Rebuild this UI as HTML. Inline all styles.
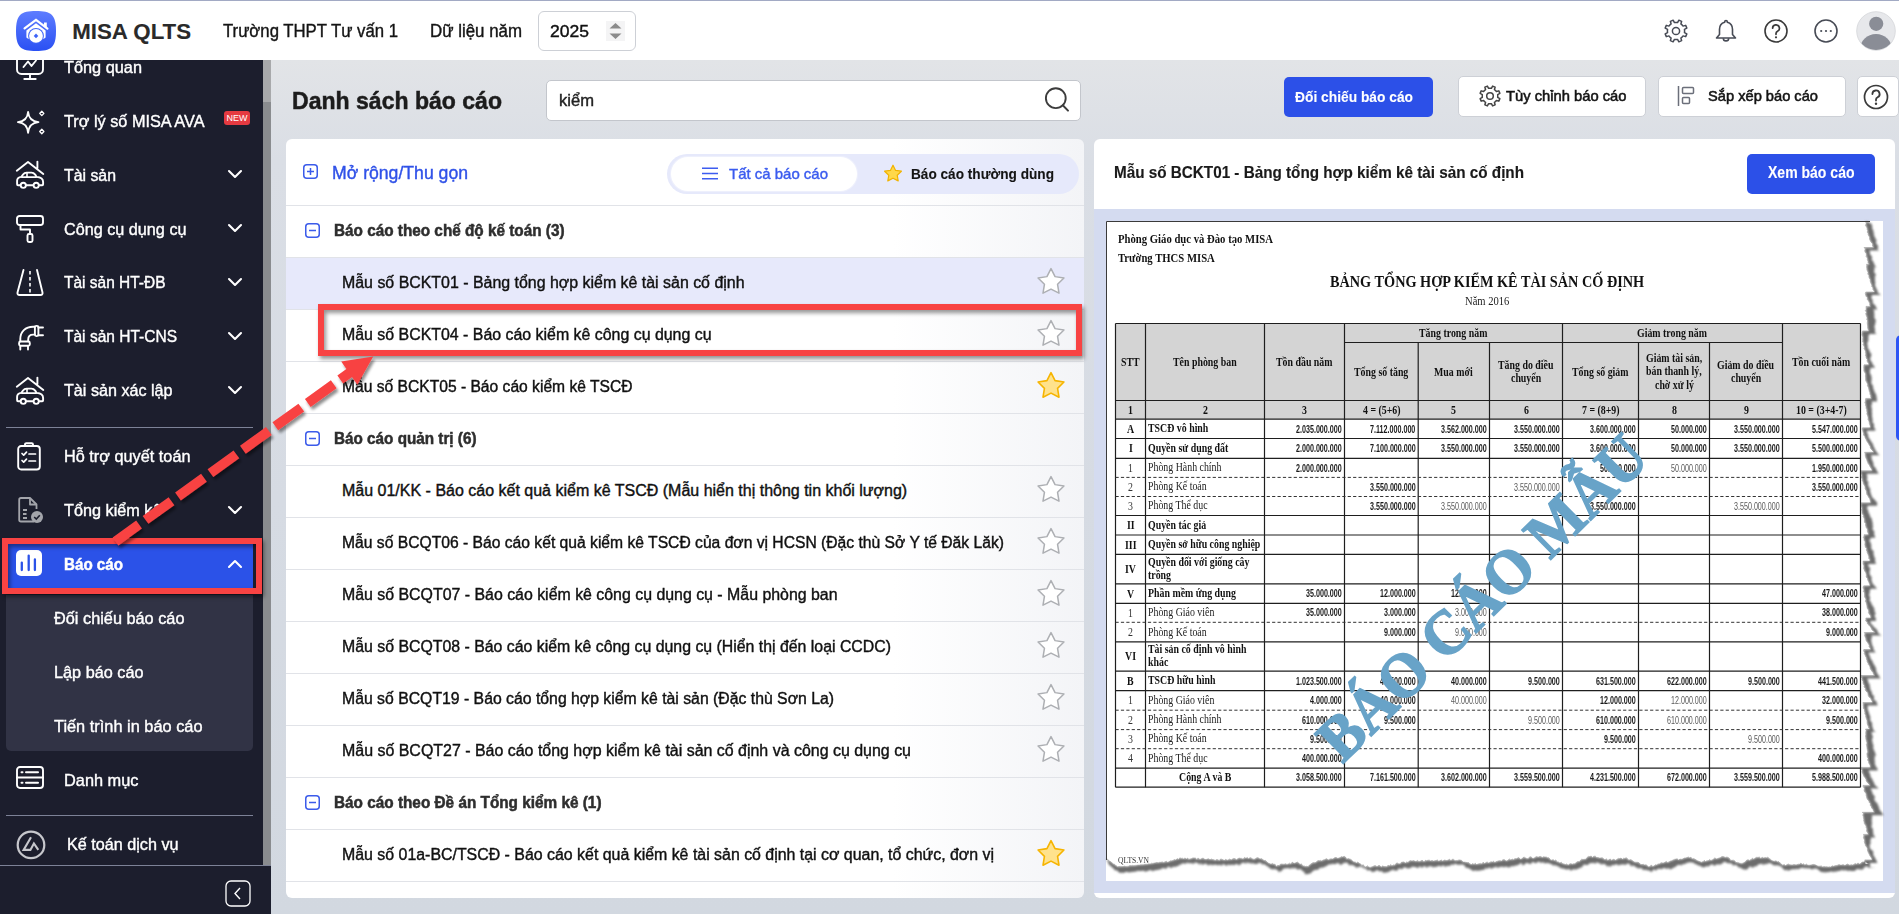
<!DOCTYPE html>
<html><head><meta charset="utf-8">
<style>
*{box-sizing:border-box;margin:0;padding:0}
html,body{width:1899px;height:914px;overflow:hidden}
body{position:relative;background:linear-gradient(180deg,#e2e4e7 60px,#dadee5 160px,#d6dbe3 500px,#d2d8e0 914px);font-family:"Liberation Sans",sans-serif;color:#1f1f1f}
.a{position:absolute}
.t{position:absolute;white-space:nowrap;line-height:1;transform-origin:0 0}
svg.a{overflow:visible}
</style></head>
<body>
<div class="a" style="left:0px;top:60px;width:263px;height:854px;background:#1c1e2d"></div>
<div class="a" style="left:263px;top:60px;width:8px;height:810px;background:#8a8c8f"></div>
<div class="a" style="left:263px;top:60px;width:8px;height:42px;background:#a8a9ab"></div>
<svg class="a" style="left:16px;top:48px" width="28" height="32" viewBox="0 0 28 32"><g fill="none" stroke="#fff" stroke-width="1.9" stroke-linecap="round" stroke-linejoin="round"><rect x="1" y="1" width="26" height="25" rx="4.5"/><path d="M7.5 19 L12 13.5 L15.5 18 L20 12.5"/><path d="M14 26 V30.5 M8.3 31 H19.7"/></g></svg>
<div class="t" style="left:64.00px;top:58.61px;font-size:17.00px;color:#fff;-webkit-text-stroke-width:0.4px;transform:scaleX(0.9595);">Tổng quan</div>
<svg class="a" style="left:16px;top:108px" width="30" height="28" viewBox="0 0 30 28"><g fill="none" stroke="#fff" stroke-width="1.9" stroke-linecap="round" stroke-linejoin="round"><path d="M12.1 3.9 Q12.9 13.3 22.5 14.1 Q12.9 14.9 12.1 24.9 Q11.3 14.9 1.9 14.1 Q11.3 13.3 12.1 3.9Z" stroke-width="1.8"/><path d="M25.8 3.2 L27.9 5.4 L25.8 7.6 L23.7 5.4Z" stroke-width="1.3"/><path d="M25.8 21.3 L27.9 23.5 L25.8 25.7 L23.7 23.5Z" stroke-width="1.3"/></g></svg>
<div class="t" style="left:64.00px;top:112.61px;font-size:17.00px;color:#fff;-webkit-text-stroke-width:0.4px;transform:scaleX(0.9566);">Trợ lý số MISA AVA</div>
<div class="a" style="left:224px;top:111px;width:26px;height:14px;background:#e53a41;border-radius:3px"></div>
<div class="t" style="left:226.50px;top:114.38px;font-size:9.00px;color:#fff;">NEW</div>
<svg class="a" style="left:12px;top:155px" width="36" height="36" viewBox="0 0 36 36"><g fill="none" stroke="#fff" stroke-width="1.9" stroke-linecap="round" stroke-linejoin="round"><path d="M4.8 15.7 L16 7 L31.3 19 M25.4 6.6 V13.2"/><path d="M8.6 30.2 H6 C5.4 30.2 5.1 29.8 5.1 29.2 V25.8 C5.1 23.6 6.6 22.2 9.4 21.9 L11 19.5 C11.9 18.3 13 17.6 14.6 17.6 H19.4 C21 17.6 22.2 18.3 23.2 19.6 L24.6 21.9 C28.6 22.2 31.1 23.8 31.1 27 V29.2 C31.1 29.8 30.8 30.2 30.2 30.2 H27 M14 30.2 H21.4"/><path d="M9.8 22.1 H24.2 M15 18 V22" stroke-width="1.6"/><circle cx="11.3" cy="30.3" r="2.6" fill="#1c1e2d"/><circle cx="24.2" cy="30.3" r="2.6" fill="#1c1e2d"/></g></svg>
<div class="t" style="left:64.00px;top:166.61px;font-size:17.00px;color:#fff;-webkit-text-stroke-width:0.4px;transform:scaleX(0.9327);">Tài sản</div>
<svg class="a" style="left:228px;top:170px" width="14" height="9" viewBox="0 0 14 9"><path d="M1 1 L7 7 L13 1" fill="none" stroke="#fff" stroke-width="2.1" stroke-linecap="round" stroke-linejoin="round"/></svg>
<svg class="a" style="left:16px;top:215px" width="28" height="28" viewBox="0 0 28 28"><g fill="none" stroke="#fff" stroke-width="1.9" stroke-linecap="round" stroke-linejoin="round"><rect x="1" y="1" width="26" height="9" rx="2.5"/><path d="M4.5 10 V14.5 H14 V19"/><rect x="11.5" y="19" width="5" height="8" rx="1.5"/></g></svg>
<div class="t" style="left:64.00px;top:220.61px;font-size:17.00px;color:#fff;-webkit-text-stroke-width:0.4px;transform:scaleX(0.9530);">Công cụ dụng cụ</div>
<svg class="a" style="left:228px;top:224px" width="14" height="9" viewBox="0 0 14 9"><path d="M1 1 L7 7 L13 1" fill="none" stroke="#fff" stroke-width="2.1" stroke-linecap="round" stroke-linejoin="round"/></svg>
<svg class="a" style="left:16px;top:269px" width="28" height="28" viewBox="0 0 28 28"><g fill="none" stroke="#fff" stroke-width="1.9" stroke-linecap="round" stroke-linejoin="round"><path d="M7.5 1 L1.5 23.5 C1.2 25 2 26 3.5 26 H24.5 C26 26 26.8 25 26.5 23.5 L21 1"/></g><path d="M14 2 V24" stroke="#fff" stroke-width="1.6" stroke-dasharray="3.5 2.5"/></svg>
<div class="t" style="left:64.00px;top:274.11px;font-size:17.00px;color:#fff;-webkit-text-stroke-width:0.4px;transform:scaleX(0.9105);">Tài sản HT-ĐB</div>
<svg class="a" style="left:228px;top:278px" width="14" height="9" viewBox="0 0 14 9"><path d="M1 1 L7 7 L13 1" fill="none" stroke="#fff" stroke-width="2.1" stroke-linecap="round" stroke-linejoin="round"/></svg>
<svg class="a" style="left:14px;top:320px" width="36" height="36" viewBox="0 0 36 36"><g fill="none" stroke="#fff" stroke-width="1.9" stroke-linecap="round" stroke-linejoin="round"><path d="M6.3 21.3 V19 C6.3 11.8 11.5 6.7 19 6.7 H20.8 M14.2 21.3 V19.5 C14.2 16.5 16.2 14.6 19.2 14.6 H20.8 M24.4 7.5 H29 M24.4 15.2 H29 M6.3 25.9 V29.6 M14 25.9 V29.6"/><rect x="20.9" y="5.9" width="3.5" height="10.2" rx="1.5"/><rect x="5.1" y="21.5" width="10.7" height="4.3" rx="1.5"/></g></svg>
<div class="t" style="left:64.00px;top:328.11px;font-size:17.00px;color:#fff;-webkit-text-stroke-width:0.4px;transform:scaleX(0.9131);">Tài sản HT-CNS</div>
<svg class="a" style="left:228px;top:332px" width="14" height="9" viewBox="0 0 14 9"><path d="M1 1 L7 7 L13 1" fill="none" stroke="#fff" stroke-width="2.1" stroke-linecap="round" stroke-linejoin="round"/></svg>
<svg class="a" style="left:12px;top:371px" width="36" height="36" viewBox="0 0 36 36"><g fill="none" stroke="#fff" stroke-width="1.9" stroke-linecap="round" stroke-linejoin="round"><path d="M4.8 15.7 L16 7 L31.3 19 M25.4 6.6 V13.2"/><path d="M8.6 30.2 H6 C5.4 30.2 5.1 29.8 5.1 29.2 V25.8 C5.1 23.6 6.6 22.2 9.4 21.9 L11 19.5 C11.9 18.3 13 17.6 14.6 17.6 H19.4 C21 17.6 22.2 18.3 23.2 19.6 L24.6 21.9 C28.6 22.2 31.1 23.8 31.1 27 V29.2 C31.1 29.8 30.8 30.2 30.2 30.2 H27 M14 30.2 H21.4"/><path d="M9.8 22.1 H24.2 M15 18 V22" stroke-width="1.6"/><circle cx="11.3" cy="30.3" r="2.6" fill="#1c1e2d"/><circle cx="24.2" cy="30.3" r="2.6" fill="#1c1e2d"/></g></svg>
<div class="t" style="left:64.00px;top:382.11px;font-size:17.00px;color:#fff;-webkit-text-stroke-width:0.4px;transform:scaleX(0.9489);">Tài sản xác lập</div>
<svg class="a" style="left:228px;top:386px" width="14" height="9" viewBox="0 0 14 9"><path d="M1 1 L7 7 L13 1" fill="none" stroke="#fff" stroke-width="2.1" stroke-linecap="round" stroke-linejoin="round"/></svg>
<div class="a" style="left:6px;top:427px;width:247px;height:1px;background:#7d8297"></div>
<svg class="a" style="left:17px;top:442px" width="24" height="29" viewBox="0 0 24 29"><g fill="none" stroke="#fff" stroke-width="1.9" stroke-linecap="round" stroke-linejoin="round"><rect x="1.2" y="4" width="21.6" height="23.5" rx="3"/><path d="M8 4 V2.5 C8 1.7 8.6 1.2 9.3 1.2 H14.7 C15.4 1.2 16 1.7 16 2.5 V4 Z"/><path d="M5 11.5 L6.7 13.2 L9.5 10.2 M12 12 H18.5 M5 18.5 L6.7 20.2 L9.5 17.2 M12 19 H18.5" stroke-width="1.7"/></g></svg>
<div class="t" style="left:64.00px;top:447.61px;font-size:17.00px;color:#fff;-webkit-text-stroke-width:0.4px;transform:scaleX(0.9575);">Hỗ trợ quyết toán</div>
<svg class="a" style="left:18px;top:497px" width="26" height="28" viewBox="0 0 26 28"><g fill="none" stroke="#a3a5ab" stroke-width="1.8" stroke-linejoin="round"><path d="M16 24.5 H3 C2 24.5 1.2 23.7 1.2 22.7 V2.8 C1.2 1.8 2 1 3 1 H12 L18.5 7.5 V12"/><path d="M12 1 V7.5 H18.5"/><path d="M5 13 H9 M5 17 H8.5 M5 21 H9"/></g><circle cx="19" cy="20" r="6" fill="#a3a5ab"/><path d="M16.2 20 L18.3 22 L21.8 18.3" fill="none" stroke="#1c1e2d" stroke-width="1.6"/></svg>
<div class="t" style="left:64.00px;top:501.61px;font-size:17.00px;color:#fff;-webkit-text-stroke-width:0.4px;transform:scaleX(0.9550);">Tổng kiểm kê</div>
<svg class="a" style="left:228px;top:506px" width="14" height="9" viewBox="0 0 14 9"><path d="M1 1 L7 7 L13 1" fill="none" stroke="#fff" stroke-width="2.1" stroke-linecap="round" stroke-linejoin="round"/></svg>
<div class="a" style="left:6px;top:538px;width:247px;height:53px;background:#2b52e8"></div>
<svg class="a" style="left:16px;top:550px" width="26" height="26" viewBox="0 0 26 26"><rect x="0" y="0" width="26" height="26" rx="5" fill="#fff"/><path d="M5.8 12.6 V20 M12.7 5.6 V20 M18.9 9.5 V20" stroke="#2b52e8" stroke-width="2.3" stroke-linecap="round"/></svg>
<div class="t" style="left:64.00px;top:555.61px;font-size:17.00px;color:#fff;font-weight:bold;-webkit-text-stroke-width:0.5px;transform:scaleX(0.8921);">Báo cáo</div>
<svg class="a" style="left:228px;top:559px" width="14" height="9" viewBox="0 0 14 9"><path d="M1 8 L7 2 L13 8" fill="none" stroke="#fff" stroke-width="2.1" stroke-linecap="round" stroke-linejoin="round"/></svg>
<div class="a" style="left:6px;top:595px;width:247px;height:156px;background:#313345;border-radius:0 0 5px 5px"></div>
<div class="t" style="left:54.00px;top:609.61px;font-size:17.00px;color:#fff;-webkit-text-stroke-width:0.4px;transform:scaleX(0.9589);">Đối chiếu báo cáo</div>
<div class="t" style="left:54.00px;top:663.61px;font-size:17.00px;color:#fff;-webkit-text-stroke-width:0.4px;transform:scaleX(0.9563);">Lập báo cáo</div>
<div class="t" style="left:54.00px;top:717.61px;font-size:17.00px;color:#fff;-webkit-text-stroke-width:0.4px;transform:scaleX(0.9621);">Tiến trình in báo cáo</div>
<svg class="a" style="left:16px;top:766px" width="28" height="23" viewBox="0 0 28 23"><g fill="none" stroke="#fff" stroke-width="1.9" stroke-linecap="round" stroke-linejoin="round"><rect x="1" y="1" width="26" height="21" rx="3"/><path d="M1 11.5 H27"/><path d="M5.5 6.2 H6.5 M5.5 16.7 H6.5 M10 6.2 H22 M10 16.7 H22" stroke-width="2"/></g></svg>
<div class="t" style="left:64.00px;top:771.91px;font-size:17.00px;color:#fff;-webkit-text-stroke-width:0.4px;transform:scaleX(0.9615);">Danh mục</div>
<div class="a" style="left:6px;top:815px;width:247px;height:1px;background:#7d8297"></div>
<svg class="a" style="left:16px;top:831px" width="30" height="30" viewBox="0 0 30 30"><circle cx="15" cy="13.9" r="13.3" fill="none" stroke="#c6c7cc" stroke-width="2.2"/><path d="M15 6.2 L7.6 18.9 H14.4 L17.9 12.4 L22.3 18.9" fill="none" stroke="#c6c7cc" stroke-width="2.1" stroke-linejoin="miter" stroke-linecap="butt"/></svg>
<div class="t" style="left:66.50px;top:836.11px;font-size:17.00px;color:#fff;-webkit-text-stroke-width:0.4px;transform:scaleX(0.9514);">Kế toán dịch vụ</div>
<div class="a" style="left:263px;top:865px;width:8px;height:49px;background:#1c1e2d"></div>
<div class="a" style="left:0px;top:865px;width:271px;height:1px;background:#7d8297"></div>
<svg class="a" style="left:225px;top:880px" width="26" height="27" viewBox="0 0 26 27"><rect x="1" y="1" width="24" height="25" rx="5" fill="none" stroke="#fff" stroke-width="1.3"/><path d="M15 8 L10 13.5 L15 19" fill="none" stroke="#fff" stroke-width="1.4"/></svg>
<div class="a" style="left:0px;top:0px;width:1899px;height:1px;background:#a2aac4"></div>
<div class="a" style="left:0px;top:1px;width:1899px;height:59px;background:#fff"></div>
<svg class="a" style="left:16px;top:11px" width="40" height="40" viewBox="0 0 40 40"><defs><linearGradient id="lg" x1="0" y1="0" x2="0" y2="1"><stop offset="0" stop-color="#5e7dff"/><stop offset="1" stop-color="#2a50f3"/></linearGradient></defs>
<path d="M20 0 C35 0 40 3.5 40 20 C40 36.5 35 40 20 40 C5 40 0 36.5 0 20 C0 3.5 5 0 20 0Z" fill="url(#lg)"/>
<path d="M8.6 17.4 L20 8.8 L31.4 17.6" fill="none" stroke="#fff" stroke-width="2.3" stroke-linecap="round" stroke-linejoin="round"/>
<path d="M28 11.6 H30.8 V17.2 L28 15Z" fill="#fff"/>
<path d="M10.4 19.6 L20 12.2 L29.6 19.6 V26.5 Q28 28.2 26 28.5 H14 Q12 28.2 10.4 26.5Z" fill="#fff"/>
<circle cx="20" cy="24.9" r="7.9" fill="#3d63f8"/>
<circle cx="20" cy="24.9" r="6.9" fill="#fff"/>
<path d="M20 22.6 L22.3 24.9 L20 27.2 L17.7 24.9Z" fill="#3d63f8"/></svg>
<div class="t" style="left:72.20px;top:20.72px;font-size:22.30px;color:#2a2a2a;font-weight:bold;-webkit-text-stroke:0.1px #2a2a2a;">MISA QLTS</div>
<div class="t" style="left:223.00px;top:22.26px;font-size:18.00px;color:#141414;-webkit-text-stroke-width:0.4px;transform:scaleX(0.9294);">Trường THPT Tư vấn 1</div>
<div class="t" style="left:430.00px;top:22.26px;font-size:18.00px;color:#141414;-webkit-text-stroke-width:0.4px;transform:scaleX(0.9379);">Dữ liệu năm</div>
<div class="a" style="left:538px;top:11px;width:98px;height:40px;border:1px solid #cdd0d6;border-radius:6px;background:#fff"></div>
<div class="t" style="left:549.50px;top:23.41px;font-size:17.00px;color:#111;-webkit-text-stroke-width:0.4px;transform:scaleX(1.0312);">2025</div>
<div class="a" style="left:606px;top:21px;width:19px;height:20px;background:#f4f4f5"></div>
<svg class="a" style="left:606px;top:21px" width="19" height="20" viewBox="0 0 19 20"><path d="M3.5 7.5 L9.5 2 L15.5 7.5Z M3.5 12.5 L9.5 18 L15.5 12.5Z" fill="#8c8c8c"/></svg>
<svg class="a" style="left:1664px;top:19px" width="24" height="24" viewBox="0 0 24 24"><g fill="none" stroke="#474b55" stroke-width="1.5" stroke-linejoin="round"><path d="M20.60 12.00 L20.46 13.55 L22.83 14.87 L21.68 17.63 L19.07 16.89 L18.08 18.08 L16.89 19.07 L17.63 21.68 L14.87 22.83 L13.55 20.46 L12.00 20.60 L10.45 20.46 L9.13 22.83 L6.37 21.68 L7.11 19.07 L5.92 18.08 L4.93 16.89 L2.32 17.63 L1.17 14.87 L3.54 13.55 L3.40 12.00 L3.54 10.45 L1.17 9.13 L2.32 6.37 L4.93 7.11 L5.92 5.92 L7.11 4.93 L6.37 2.32 L9.13 1.17 L10.45 3.54 L12.00 3.40 L13.55 3.54 L14.87 1.17 L17.63 2.32 L16.89 4.93 L18.08 5.92 L19.07 7.11 L21.68 6.37 L22.83 9.13 L20.46 10.45Z"/><circle cx="12" cy="12" r="3.6"/></g></svg>
<svg class="a" style="left:1714px;top:19px" width="24" height="24" viewBox="0 0 24 24"><g fill="none" stroke="#474b55" stroke-width="1.6" stroke-linejoin="round">
<path d="M12 1.5c-.9 0-1.3.5-1.3 1.2v.6C7.4 4.2 5.5 6.9 5.5 10.3v5.2L2.5 19h19l-3-3.5v-5.2c0-3.4-1.9-6.1-5.2-7v-.6c0-.7-.4-1.2-1.3-1.2z"/>
<path d="M9.3 19.2a2.7 2.7 0 0 0 5.4 0"/></g></svg>
<svg class="a" style="left:1764px;top:19px" width="24" height="24" viewBox="0 0 24 24"><circle cx="12" cy="12" r="11" fill="none" stroke="#3a3a3a" stroke-width="1.6"/>
<path d="M8.6 9.2a3.4 3.4 0 1 1 4.9 3.1c-.9.5-1.5 1.1-1.5 2.2v.8" fill="none" stroke="#3a3a3a" stroke-width="1.7" stroke-linecap="round"/>
<circle cx="12" cy="18.3" r="1.1" fill="#3a3a3a"/></svg>
<svg class="a" style="left:1814px;top:19px" width="24" height="24" viewBox="0 0 24 24"><circle cx="12" cy="12" r="11" fill="none" stroke="#474b55" stroke-width="1.6"/>
<circle cx="7.2" cy="12" r="1.1" fill="#474b55"/><circle cx="12" cy="12" r="1.1" fill="#474b55"/><circle cx="16.8" cy="12" r="1.1" fill="#474b55"/></svg>
<svg class="a" style="left:1856px;top:11px" width="40" height="40" viewBox="0 0 40 40"><defs><clipPath id="av"><circle cx="20" cy="20" r="19"/></clipPath></defs><circle cx="20" cy="20" r="19.3" fill="#e7e8eb" stroke="#d4d5d9" stroke-width="0.8"/><g clip-path="url(#av)"><circle cx="20.2" cy="12.8" r="7.1" fill="#8a8d96"/><ellipse cx="20" cy="38.5" rx="16" ry="15.5" fill="#8a8d96"/></g></svg>
<div class="t" style="left:292.00px;top:88.68px;font-size:24.00px;color:#1c1c1c;font-weight:bold;-webkit-text-stroke-width:0.5px;transform:scaleX(0.9601);">Danh sách báo cáo</div>
<div class="a" style="left:546px;top:80px;width:535px;height:41px;background:#fff;border:1px solid #c3c6cc;border-radius:5px"></div>
<div class="t" style="left:559.00px;top:92.96px;font-size:16.00px;color:#222;-webkit-text-stroke-width:0.4px;transform:scaleX(1.0360);">kiểm</div>
<svg class="a" style="left:1043px;top:85px" width="28" height="28" viewBox="0 0 28 28"><circle cx="12.8" cy="13.2" r="9.9" fill="none" stroke="#3c3c3c" stroke-width="1.9"/><path d="M19.8 20.3 L25 25.6" stroke="#3c3c3c" stroke-width="2" stroke-linecap="round"/></svg>
<div class="a" style="left:1284px;top:77px;width:149px;height:40px;background:#2c50e8;border-radius:5px"></div>
<div class="t" style="left:1295.00px;top:88.80px;font-size:15.00px;color:#fff;font-weight:bold;transform:scaleX(0.9193);-webkit-text-stroke:0.1px #fff;">Đối chiếu báo cáo</div>
<div class="a" style="left:1458px;top:76px;width:188px;height:41px;background:#fff;border:1px solid #cdd0d6;border-radius:5px"></div>
<svg class="a" style="left:1479px;top:85px" width="22" height="22" viewBox="0 0 22 22"><g fill="none" stroke="#444" stroke-width="1.5" stroke-linejoin="round"><path d="M18.80 11.00 L18.67 12.40 L20.86 13.61 L19.82 16.12 L17.42 15.43 L16.52 16.52 L15.43 17.42 L16.12 19.82 L13.61 20.86 L12.40 18.67 L11.00 18.80 L9.60 18.67 L8.39 20.86 L5.88 19.82 L6.57 17.42 L5.48 16.52 L4.58 15.43 L2.18 16.12 L1.14 13.61 L3.33 12.40 L3.20 11.00 L3.33 9.60 L1.14 8.39 L2.18 5.88 L4.58 6.57 L5.48 5.48 L6.57 4.58 L5.88 2.18 L8.39 1.14 L9.60 3.33 L11.00 3.20 L12.40 3.33 L13.61 1.14 L16.12 2.18 L15.43 4.58 L16.52 5.48 L17.42 6.57 L19.82 5.88 L20.86 8.39 L18.67 9.60Z"/><circle cx="11" cy="11" r="3.3"/></g></svg>
<div class="t" style="left:1506.00px;top:88.30px;font-size:15.00px;color:#141414;transform:scaleX(0.9830);-webkit-text-stroke:0.55px #141414;">Tùy chỉnh báo cáo</div>
<div class="a" style="left:1658px;top:76px;width:188px;height:41px;background:#fff;border:1px solid #cdd0d6;border-radius:5px"></div>
<svg class="a" style="left:1677px;top:85px" width="20" height="22" viewBox="0 0 20 22"><g fill="none" stroke="#6b6f7a" stroke-width="1.5"><path d="M1.5 1 V21"/><rect x="5.5" y="2.5" width="11" height="6" rx="1"/><rect x="5.5" y="12.5" width="7" height="6" rx="1"/></g></svg>
<div class="t" style="left:1708.00px;top:88.30px;font-size:15.00px;color:#141414;transform:scaleX(0.9770);-webkit-text-stroke:0.55px #141414;">Sắp xếp báo cáo</div>
<div class="a" style="left:1857px;top:76px;width:42px;height:41px;background:#fff;border:1px solid #cdd0d6;border-radius:5px"></div>
<svg class="a" style="left:1863px;top:84px" width="26" height="26" viewBox="0 0 26 26"><circle cx="13" cy="13" r="11.5" fill="none" stroke="#3a3a3a" stroke-width="1.7"/><path d="M9.4 10a3.6 3.6 0 1 1 5.2 3.3c-1 .5-1.6 1.2-1.6 2.3v.9" fill="none" stroke="#3a3a3a" stroke-width="1.8" stroke-linecap="round"/><circle cx="13" cy="19.8" r="1.2" fill="#3a3a3a"/></svg>
<div class="a" style="left:286px;top:139px;width:798px;height:759px;background:linear-gradient(90deg,#fff 0%,#fff 76%,#f3f4f7 100%);border-radius:6px"></div>
<svg class="a" style="left:303px;top:164px" width="15" height="15" viewBox="0 0 15 15"><rect x="0.75" y="0.75" width="13.5" height="13.5" rx="3" fill="none" stroke="#3b5bea" stroke-width="1.5"/><path d="M7.5 4 V11 M4 7.5 H11" stroke="#3b5bea" stroke-width="1.5"/></svg>
<div class="t" style="left:332.00px;top:164.26px;font-size:18.00px;color:#2f51e8;-webkit-text-stroke-width:0.4px;transform:scaleX(0.9793);">Mở rộng/Thu gọn</div>
<div class="a" style="left:667px;top:154px;width:412px;height:40px;background:#e6e9fb;border-radius:20px"></div>
<div class="a" style="left:671px;top:157px;width:186px;height:34px;background:#fff;border-radius:17px;box-shadow:0 0 0 1px #eef0fc"></div>
<svg class="a" style="left:701px;top:167px" width="18" height="13" viewBox="0 0 18 13"><path d="M1 1.2 H17 M1 6.5 H17 M1 11.8 H17" stroke="#3d5cf0" stroke-width="1.6"/></svg>
<div class="t" style="left:729.00px;top:166.30px;font-size:15.00px;color:#3a5bef;-webkit-text-stroke-width:0.4px;transform:scaleX(0.9977);">Tất cả báo cáo</div>
<svg class="a" style="left:883px;top:164px" width="20" height="18" viewBox="0 0 20 18"><path d="M10 1.2 L12.6 6.4 L18.4 7.2 L14.2 11.2 L15.2 16.9 L10 14.2 L4.8 16.9 L5.8 11.2 L1.6 7.2 L7.4 6.4Z" fill="#ffd84a" stroke="#f1b300" stroke-width="1.2" stroke-linejoin="round"/></svg>
<div class="t" style="left:911.00px;top:166.30px;font-size:15.00px;color:#141414;font-weight:bold;transform:scaleX(0.9088);-webkit-text-stroke:0.1px #141414;">Báo cáo thường dùng</div>
<div class="a" style="left:286px;top:205px;width:798px;height:1px;background:#e1e3e8"></div>
<svg class="a" style="left:305px;top:223px" width="15" height="15" viewBox="0 0 15 15"><rect x="0.75" y="0.75" width="13.5" height="13.5" rx="3" fill="none" stroke="#3b5bea" stroke-width="1.5"/><path d="M4 7.5 H11" stroke="#3b5bea" stroke-width="1.5"/></svg>
<div class="t" style="left:334.00px;top:223.26px;font-size:16.00px;color:#2e2e2e;font-weight:bold;-webkit-text-stroke-width:0.5px;transform:scaleX(0.9567);">Báo cáo theo chế độ kế toán (3)</div>
<div class="a" style="left:286px;top:257px;width:798px;height:1px;background:#e1e3e8"></div>
<div class="a" style="left:286px;top:258px;width:798px;height:51px;background:#e7e9fb"></div>
<div class="t" style="left:342.00px;top:275.16px;font-size:16.00px;color:#111;-webkit-text-stroke-width:0.4px;transform:scaleX(0.9951);">Mẫu số BCKT01 - Bảng tổng hợp kiểm kê tài sản cố định</div>
<svg class="a" style="left:1037px;top:267px" width="28" height="27" viewBox="0 0 28 27"><path d="M14.00 1.60 L18.06 9.62 L26.93 11.00 L20.56 17.33 L21.99 26.20 L14.00 22.10 L6.01 26.20 L7.44 17.33 L1.07 11.00 L9.94 9.62Z" fill="#fff" stroke="#adafb3" stroke-width="1.5" stroke-linejoin="round"/></svg>
<div class="a" style="left:286px;top:309px;width:798px;height:1px;background:#e1e3e8"></div>
<div class="t" style="left:342.00px;top:327.16px;font-size:16.00px;color:#111;-webkit-text-stroke-width:0.4px;transform:scaleX(0.9939);">Mẫu số BCKT04 - Báo cáo kiểm kê công cụ dụng cụ</div>
<svg class="a" style="left:1037px;top:319px" width="28" height="27" viewBox="0 0 28 27"><path d="M14.00 1.60 L18.06 9.62 L26.93 11.00 L20.56 17.33 L21.99 26.20 L14.00 22.10 L6.01 26.20 L7.44 17.33 L1.07 11.00 L9.94 9.62Z" fill="#fff" stroke="#adafb3" stroke-width="1.5" stroke-linejoin="round"/></svg>
<div class="a" style="left:286px;top:361px;width:798px;height:1px;background:#e1e3e8"></div>
<div class="t" style="left:342.00px;top:379.16px;font-size:16.00px;color:#111;-webkit-text-stroke-width:0.4px;transform:scaleX(0.9761);">Mẫu số BCKT05 - Báo cáo kiểm kê TSCĐ</div>
<svg class="a" style="left:1037px;top:371px" width="28" height="27" viewBox="0 0 28 27"><path d="M14.00 1.60 L18.06 9.62 L26.93 11.00 L20.56 17.33 L21.99 26.20 L14.00 22.10 L6.01 26.20 L7.44 17.33 L1.07 11.00 L9.94 9.62Z" fill="#ffe28c" stroke="#f6b400" stroke-width="1.6" stroke-linejoin="round"/></svg>
<div class="a" style="left:286px;top:413px;width:798px;height:1px;background:#e1e3e8"></div>
<svg class="a" style="left:305px;top:431px" width="15" height="15" viewBox="0 0 15 15"><rect x="0.75" y="0.75" width="13.5" height="13.5" rx="3" fill="none" stroke="#3b5bea" stroke-width="1.5"/><path d="M4 7.5 H11" stroke="#3b5bea" stroke-width="1.5"/></svg>
<div class="t" style="left:334.00px;top:431.26px;font-size:16.00px;color:#2e2e2e;font-weight:bold;-webkit-text-stroke-width:0.5px;transform:scaleX(0.9541);">Báo cáo quản trị (6)</div>
<div class="a" style="left:286px;top:465px;width:798px;height:1px;background:#e1e3e8"></div>
<div class="t" style="left:342.00px;top:483.16px;font-size:16.00px;color:#111;-webkit-text-stroke-width:0.4px;">Mẫu 01/KK - Báo cáo kết quả kiểm kê TSCĐ (Mẫu hiển thị thông tin khối lượng)</div>
<svg class="a" style="left:1037px;top:475px" width="28" height="27" viewBox="0 0 28 27"><path d="M14.00 1.60 L18.06 9.62 L26.93 11.00 L20.56 17.33 L21.99 26.20 L14.00 22.10 L6.01 26.20 L7.44 17.33 L1.07 11.00 L9.94 9.62Z" fill="#fff" stroke="#adafb3" stroke-width="1.5" stroke-linejoin="round"/></svg>
<div class="a" style="left:286px;top:517px;width:798px;height:1px;background:#e1e3e8"></div>
<div class="t" style="left:342.00px;top:535.16px;font-size:16.00px;color:#111;-webkit-text-stroke-width:0.4px;transform:scaleX(0.9787);">Mẫu số BCQT06 - Báo cáo kết quả kiểm kê TSCĐ của đơn vị HCSN (Đặc thù Sở Y tế Đăk Lăk)</div>
<svg class="a" style="left:1037px;top:527px" width="28" height="27" viewBox="0 0 28 27"><path d="M14.00 1.60 L18.06 9.62 L26.93 11.00 L20.56 17.33 L21.99 26.20 L14.00 22.10 L6.01 26.20 L7.44 17.33 L1.07 11.00 L9.94 9.62Z" fill="#fff" stroke="#adafb3" stroke-width="1.5" stroke-linejoin="round"/></svg>
<div class="a" style="left:286px;top:569px;width:798px;height:1px;background:#e1e3e8"></div>
<div class="t" style="left:342.00px;top:587.16px;font-size:16.00px;color:#111;-webkit-text-stroke-width:0.4px;transform:scaleX(0.9931);">Mẫu số BCQT07 - Báo cáo kiểm kê công cụ dụng cụ - Mẫu phòng ban</div>
<svg class="a" style="left:1037px;top:579px" width="28" height="27" viewBox="0 0 28 27"><path d="M14.00 1.60 L18.06 9.62 L26.93 11.00 L20.56 17.33 L21.99 26.20 L14.00 22.10 L6.01 26.20 L7.44 17.33 L1.07 11.00 L9.94 9.62Z" fill="#fff" stroke="#adafb3" stroke-width="1.5" stroke-linejoin="round"/></svg>
<div class="a" style="left:286px;top:621px;width:798px;height:1px;background:#e1e3e8"></div>
<div class="t" style="left:342.00px;top:639.16px;font-size:16.00px;color:#111;-webkit-text-stroke-width:0.4px;transform:scaleX(0.9909);">Mẫu số BCQT08 - Báo cáo kiểm kê công cụ dụng cụ (Hiển thị đến loại CCDC)</div>
<svg class="a" style="left:1037px;top:631px" width="28" height="27" viewBox="0 0 28 27"><path d="M14.00 1.60 L18.06 9.62 L26.93 11.00 L20.56 17.33 L21.99 26.20 L14.00 22.10 L6.01 26.20 L7.44 17.33 L1.07 11.00 L9.94 9.62Z" fill="#fff" stroke="#adafb3" stroke-width="1.5" stroke-linejoin="round"/></svg>
<div class="a" style="left:286px;top:673px;width:798px;height:1px;background:#e1e3e8"></div>
<div class="t" style="left:342.00px;top:691.16px;font-size:16.00px;color:#111;-webkit-text-stroke-width:0.4px;transform:scaleX(0.9868);">Mẫu số BCQT19 - Báo cáo tổng hợp kiểm kê tài sản (Đặc thù Sơn La)</div>
<svg class="a" style="left:1037px;top:683px" width="28" height="27" viewBox="0 0 28 27"><path d="M14.00 1.60 L18.06 9.62 L26.93 11.00 L20.56 17.33 L21.99 26.20 L14.00 22.10 L6.01 26.20 L7.44 17.33 L1.07 11.00 L9.94 9.62Z" fill="#fff" stroke="#adafb3" stroke-width="1.5" stroke-linejoin="round"/></svg>
<div class="a" style="left:286px;top:725px;width:798px;height:1px;background:#e1e3e8"></div>
<div class="t" style="left:342.00px;top:743.16px;font-size:16.00px;color:#111;-webkit-text-stroke-width:0.4px;transform:scaleX(0.9968);">Mẫu số BCQT27 - Báo cáo tổng hợp kiểm kê tài sản cố định và công cụ dụng cụ</div>
<svg class="a" style="left:1037px;top:735px" width="28" height="27" viewBox="0 0 28 27"><path d="M14.00 1.60 L18.06 9.62 L26.93 11.00 L20.56 17.33 L21.99 26.20 L14.00 22.10 L6.01 26.20 L7.44 17.33 L1.07 11.00 L9.94 9.62Z" fill="#fff" stroke="#adafb3" stroke-width="1.5" stroke-linejoin="round"/></svg>
<div class="a" style="left:286px;top:777px;width:798px;height:1px;background:#e1e3e8"></div>
<svg class="a" style="left:305px;top:795px" width="15" height="15" viewBox="0 0 15 15"><rect x="0.75" y="0.75" width="13.5" height="13.5" rx="3" fill="none" stroke="#3b5bea" stroke-width="1.5"/><path d="M4 7.5 H11" stroke="#3b5bea" stroke-width="1.5"/></svg>
<div class="t" style="left:334.00px;top:795.26px;font-size:16.00px;color:#2e2e2e;font-weight:bold;-webkit-text-stroke-width:0.5px;transform:scaleX(0.9582);">Báo cáo theo Đề án Tổng kiểm kê (1)</div>
<div class="a" style="left:286px;top:829px;width:798px;height:1px;background:#e1e3e8"></div>
<div class="t" style="left:342.00px;top:847.16px;font-size:16.00px;color:#111;-webkit-text-stroke-width:0.4px;transform:scaleX(0.9939);">Mẫu số 01a-BC/TSCĐ - Báo cáo kết quả kiểm kê tài sản cố định tại cơ quan, tổ chức, đơn vị</div>
<svg class="a" style="left:1037px;top:839px" width="28" height="27" viewBox="0 0 28 27"><path d="M14.00 1.60 L18.06 9.62 L26.93 11.00 L20.56 17.33 L21.99 26.20 L14.00 22.10 L6.01 26.20 L7.44 17.33 L1.07 11.00 L9.94 9.62Z" fill="#ffe28c" stroke="#f6b400" stroke-width="1.6" stroke-linejoin="round"/></svg>
<div class="a" style="left:286px;top:881px;width:798px;height:1px;background:#e1e3e8"></div>
<div class="a" style="left:1094px;top:139px;width:801px;height:759px;background:#fff;border-radius:6px"></div>
<div class="a" style="left:1094px;top:209px;width:801px;height:684px;background:#d4dbf0"></div>
<div class="t" style="left:1114.00px;top:165.46px;font-size:16.00px;color:#1a1a1a;font-weight:bold;transform:scaleX(0.9533);-webkit-text-stroke:0.15px #1a1a1a;">Mẫu số BCKT01 - Bảng tổng hợp kiểm kê tài sản cố định</div>
<div class="a" style="left:1747px;top:154px;width:128px;height:40px;background:#2c50e8;border-radius:5px"></div>
<div class="t" style="left:1768.00px;top:165.46px;font-size:16.00px;color:#fff;font-weight:bold;transform:scaleX(0.8763);-webkit-text-stroke:0.1px #fff;">Xem báo cáo</div>
<div class="a" style="left:1896px;top:335px;width:10px;height:106px;background:#2d55f5;border-radius:5px"></div>
<div class="a" style="left:1106px;top:221px;width:777px;height:660px;background:#fff"></div>
<svg class="a" style="left:1100px;top:215px" width="800" height="680" viewBox="0 0 800 680"><defs><filter id="bl" x="-2%" y="-2%" width="104%" height="104%"><feGaussianBlur stdDeviation="0.8"/></filter></defs><path d="M766.0 6.0 L765.8 7.4 L766.2 8.8 L765.4 10.2 L766.2 11.6 L767.1 13.0 L767.1 14.4 L767.7 15.7 L767.2 17.1 L768.1 18.5 L768.2 19.9 L769.1 21.3 L769.6 22.7 L769.5 24.1 L770.2 25.5 L770.9 26.9 L772.2 28.3 L772.6 29.7 L772.5 31.1 L773.9 32.5 L764.1 32.5 L765.3 34.0 L764.7 35.5 L765.0 37.0 L766.2 38.6 L766.4 40.1 L766.1 41.6 L767.4 43.1 L767.3 44.7 L768.0 46.2 L768.0 47.7 L769.4 49.2 L766.6 49.2 L766.7 50.6 L766.6 52.0 L766.8 53.4 L766.9 54.8 L767.5 56.2 L768.1 57.6 L767.7 59.0 L768.9 60.4 L768.9 61.7 L769.2 63.1 L770.2 64.5 L770.2 65.9 L770.5 67.3 L771.1 68.7 L771.9 70.1 L771.6 71.5 L773.2 72.9 L772.6 74.3 L774.0 75.7 L774.7 77.0 L765.8 77.0 L765.3 78.5 L765.6 79.9 L766.1 81.4 L767.5 82.8 L767.1 84.2 L768.3 85.7 L769.1 87.1 L769.7 88.5 L769.7 90.0 L770.4 91.4 L766.0 91.4 L766.1 92.8 L766.2 94.3 L765.3 95.7 L766.5 97.2 L765.7 98.6 L766.1 100.1 L766.6 101.5 L767.2 102.9 L766.7 104.4 L767.6 105.8 L767.3 107.3 L767.3 108.7 L767.5 110.1 L767.6 111.6 L767.7 113.0 L768.1 114.5 L769.0 115.9 L762.6 115.9 L762.1 117.3 L762.0 118.6 L761.9 120.0 L762.5 121.3 L762.9 122.7 L762.7 124.0 L762.8 125.4 L762.6 126.8 L763.8 128.1 L763.0 129.5 L763.8 130.8 L764.5 132.2 L763.9 133.5 L764.9 134.9 L765.5 136.3 L765.4 137.6 L765.9 139.0 L765.4 140.3 L766.1 141.7 L766.1 143.0 L767.3 144.4 L767.0 145.8 L767.5 147.1 L768.6 148.5 L768.8 149.8 L764.0 149.8 L763.8 151.2 L763.7 152.6 L763.9 154.0 L763.8 155.4 L764.3 156.8 L765.3 158.2 L765.5 159.6 L765.4 161.0 L765.5 162.4 L765.6 163.8 L765.6 165.2 L766.2 166.6 L767.1 168.0 L767.6 169.4 L767.4 170.8 L768.3 172.2 L768.6 173.6 L769.0 175.0 L769.3 176.4 L769.9 177.8 L769.9 179.2 L770.7 180.6 L770.7 182.0 L771.4 183.4 L765.7 183.4 L765.4 184.8 L765.4 186.2 L764.8 187.6 L765.6 189.0 L765.4 190.4 L766.1 191.8 L766.0 193.2 L766.7 194.6 L766.7 196.0 L767.1 197.4 L766.8 198.8 L767.4 200.2 L767.8 201.6 L768.2 203.0 L767.9 204.4 L768.8 205.8 L769.2 207.2 L769.3 208.6 L769.9 210.0 L770.3 211.4 L770.1 212.8 L762.5 212.8 L762.1 214.2 L762.7 215.6 L763.1 217.1 L763.6 218.5 L763.5 220.0 L764.8 221.4 L765.2 222.9 L766.0 224.3 L766.5 225.8 L767.5 227.2 L768.5 228.7 L769.2 230.1 L770.2 231.6 L770.3 233.0 L771.4 234.4 L772.8 235.9 L774.0 237.3 L764.6 237.3 L765.2 238.8 L765.2 240.2 L765.4 241.6 L765.9 243.0 L766.6 244.4 L767.0 245.8 L767.6 247.2 L768.1 248.6 L769.3 250.1 L769.9 251.5 L770.9 252.9 L771.7 254.3 L772.1 255.7 L760.7 255.7 L761.0 257.1 L760.8 258.5 L761.9 259.9 L761.6 261.3 L761.4 262.7 L762.5 264.1 L762.2 265.5 L763.1 266.9 L763.2 268.3 L763.9 269.7 L764.8 271.1 L765.1 272.4 L765.1 273.8 L766.0 275.2 L766.4 276.6 L766.6 278.0 L766.8 279.4 L767.9 280.8 L768.5 282.2 L769.5 283.6 L770.1 285.0 L770.3 286.4 L770.7 287.8 L761.1 287.8 L761.2 289.2 L760.8 290.6 L761.5 291.9 L762.0 293.3 L761.6 294.7 L762.0 296.1 L762.0 297.5 L762.3 298.9 L763.5 300.3 L763.1 301.6 L764.1 303.0 L764.4 304.4 L764.4 305.8 L764.4 307.2 L765.7 308.6 L765.5 310.0 L765.8 311.3 L766.2 312.7 L767.4 314.1 L767.3 315.5 L767.5 316.9 L768.2 318.3 L768.3 319.7 L764.0 319.7 L764.1 321.0 L763.3 322.4 L764.1 323.8 L764.0 325.2 L765.0 326.6 L765.1 328.0 L764.8 329.4 L765.1 330.8 L765.3 332.2 L766.7 333.6 L766.2 335.0 L767.0 336.3 L767.2 337.7 L767.9 339.1 L768.3 340.5 L768.9 341.9 L768.6 343.3 L769.9 344.7 L769.8 346.1 L763.1 346.1 L763.1 347.5 L763.1 349.0 L763.8 350.4 L763.9 351.9 L763.6 353.3 L764.2 354.8 L764.8 356.2 L765.8 357.7 L766.2 359.1 L766.3 360.6 L766.1 362.0 L767.5 363.5 L767.7 365.0 L768.4 366.4 L769.1 367.9 L769.6 369.3 L770.1 370.8 L763.7 370.8 L763.0 372.2 L763.3 373.6 L764.1 375.0 L763.3 376.4 L764.5 377.8 L764.5 379.2 L764.5 380.6 L764.6 382.0 L765.5 383.4 L765.9 384.8 L765.3 386.2 L766.1 387.6 L766.5 389.0 L766.8 390.4 L767.0 391.8 L767.2 393.2 L768.1 394.6 L768.8 396.0 L768.4 397.4 L769.0 398.8 L770.2 400.2 L770.6 401.6 L770.9 403.0 L765.9 403.0 L765.9 404.4 L765.6 405.9 L767.3 407.3 L767.4 408.8 L768.9 410.2 L770.3 411.7 L771.2 413.1 L771.7 414.6 L773.2 416.0 L775.4 417.5 L764.3 417.5 L765.0 418.9 L764.5 420.3 L765.0 421.7 L765.7 423.2 L765.8 424.6 L766.3 426.0 L767.5 427.4 L768.3 428.8 L769.2 430.2 L769.0 431.7 L770.1 433.1 L770.7 434.5 L763.8 434.5 L763.5 435.9 L764.5 437.2 L764.2 438.6 L765.1 440.0 L765.4 441.3 L766.3 442.7 L766.4 444.1 L767.0 445.4 L767.1 446.8 L768.1 448.2 L768.3 449.6 L769.6 450.9 L770.0 452.3 L770.2 453.7 L771.1 455.0 L772.0 456.4 L773.2 457.8 L773.4 459.1 L774.8 460.5 L761.0 460.5 L761.2 461.9 L762.0 463.4 L761.9 464.8 L763.0 466.2 L763.0 467.6 L763.3 469.1 L764.4 470.5 L764.0 471.9 L765.4 473.3 L765.2 474.8 L766.0 476.2 L767.7 477.6 L768.0 479.0 L768.2 480.5 L768.9 481.9 L770.7 483.3 L771.2 484.7 L772.2 486.2 L772.2 487.6 L762.9 487.6 L763.3 489.0 L763.2 490.4 L763.4 491.8 L763.3 493.2 L764.4 494.6 L764.5 496.0 L764.9 497.4 L764.8 498.8 L765.7 500.2 L765.6 501.5 L766.1 502.9 L766.5 504.3 L767.1 505.7 L767.1 507.1 L767.2 508.5 L767.6 509.9 L768.3 511.3 L768.6 512.7 L770.1 514.1 L765.5 514.1 L766.1 515.5 L765.8 516.9 L765.7 518.3 L765.8 519.7 L765.5 521.0 L765.7 522.4 L765.8 523.8 L766.2 525.2 L766.4 526.6 L767.1 528.0 L766.4 529.4 L766.7 530.8 L766.9 532.2 L767.0 533.5 L767.3 534.9 L767.5 536.3 L768.0 537.7 L767.1 537.7 L766.9 539.2 L767.1 540.6 L767.2 542.1 L768.1 543.6 L767.5 545.0 L768.6 546.5 L768.7 548.0 L769.6 549.4 L770.3 550.9 L770.2 552.4 L760.6 552.4 L761.2 553.9 L762.3 555.4 L762.0 556.9 L762.6 558.4 L763.4 559.9 L763.9 561.4 L765.2 562.9 L766.0 564.4 L766.2 565.9 L767.3 567.4 L768.8 568.9 L770.1 570.4 L763.0 570.4 L763.2 571.8 L764.3 573.2 L764.2 574.6 L764.1 576.0 L765.2 577.5 L766.2 578.9 L766.1 580.3 L766.5 581.7 L766.8 583.1 L767.4 584.5 L769.0 586.0 L769.2 587.4 L770.5 588.8 L770.2 590.2 L771.2 591.6 L771.7 593.0 L773.0 594.5 L773.4 595.9 L774.5 597.3 L762.3 597.3 L763.5 598.7 L762.7 600.1 L763.3 601.4 L763.4 602.8 L763.8 604.2 L763.6 605.6 L764.2 607.0 L764.3 608.4 L765.2 609.8 L766.1 611.1 L766.1 612.5 L766.9 613.9 L766.5 615.3 L766.8 616.7 L767.9 618.1 L768.3 619.4 L763.5 619.4 L763.9 620.9 L763.4 622.3 L763.8 623.7 L764.6 625.1 L764.3 626.5 L764.6 627.9 L765.2 629.3 L765.5 630.7 L766.8 632.2 L767.4 633.6 L767.4 635.0 L767.8 636.4 L768.4 637.8 L769.2 639.2 L769.7 640.6 L770.8 642.0 L771.7 643.5 L772.1 644.9 L764.8 644.9 L765.0 646.4 L765.3 647.9 L765.2 649.0 L765.9 649.0 L766.1 649.0 L767.0 649.0 L767.1 649.0 L767.9 649.0 L768.1 649.0 L768.6 649.0 L766.0 647.3 L764.7 646.6 L763.3 647.0 L762.0 647.1 L760.6 648.5 L759.3 649.1 L757.9 647.9 L756.6 649.2 L755.2 648.5 L753.9 649.4 L752.5 650.0 L751.2 649.7 L749.8 650.2 L748.5 649.5 L747.2 649.0 L745.8 650.1 L744.4 650.3 L743.1 649.6 L741.7 650.1 L740.4 650.1 L739.0 649.6 L737.6 650.2 L736.3 650.5 L734.9 650.7 L733.6 651.3 L732.2 650.8 L730.8 652.0 L729.5 651.8 L728.1 652.1 L726.8 651.7 L725.4 651.8 L724.0 651.6 L722.7 651.9 L721.3 650.9 L720.0 651.2 L718.6 651.2 L717.2 650.8 L715.9 650.1 L714.5 649.6 L713.1 649.4 L711.8 649.8 L710.4 650.1 L709.0 650.3 L707.7 650.1 L706.3 649.1 L704.9 650.2 L703.6 648.7 L702.2 649.5 L700.9 648.0 L699.5 649.2 L698.1 649.2 L696.7 649.8 L695.3 649.8 L693.9 649.5 L692.5 649.9 L691.1 649.9 L689.7 649.7 L688.3 649.0 L686.9 649.7 L685.5 650.6 L684.1 649.4 L682.8 650.3 L681.4 648.9 L680.1 648.0 L678.7 646.6 L677.3 646.8 L676.0 645.8 L674.6 646.2 L673.3 646.1 L671.9 645.6 L670.6 644.4 L669.2 643.4 L667.8 642.2 L666.5 642.8 L665.1 642.6 L663.7 643.0 L662.2 642.3 L660.8 643.4 L659.4 642.1 L658.0 642.4 L656.6 642.3 L655.2 643.1 L653.8 644.2 L652.4 643.2 L651.0 644.6 L649.6 645.4 L648.2 644.8 L646.8 645.0 L645.5 646.5 L644.1 647.6 L642.7 648.2 L641.3 648.4 L639.9 648.3 L638.6 647.7 L637.3 647.4 L636.0 647.6 L634.7 645.8 L633.4 645.2 L632.1 645.3 L630.7 645.4 L629.4 643.3 L628.1 642.4 L626.8 642.1 L625.5 642.4 L624.2 641.9 L622.9 641.4 L621.5 641.7 L620.2 642.7 L618.9 643.1 L617.6 643.5 L616.2 643.9 L614.9 642.8 L613.6 644.0 L612.2 644.9 L610.9 645.5 L609.6 644.5 L608.2 645.8 L606.9 645.7 L605.6 646.6 L604.2 645.4 L602.9 646.7 L601.6 647.2 L600.3 646.8 L598.9 646.3 L597.6 645.8 L596.3 645.0 L595.0 644.2 L593.7 643.6 L592.3 643.9 L591.0 642.2 L589.7 642.8 L588.4 642.0 L587.0 642.6 L585.6 642.9 L584.2 643.1 L582.8 643.9 L581.4 644.3 L580.0 644.1 L578.6 645.1 L577.2 643.8 L575.8 644.1 L574.4 644.4 L573.1 645.0 L571.7 645.7 L570.3 646.1 L569.0 646.9 L567.6 647.4 L566.3 646.4 L564.9 647.3 L563.5 647.9 L562.2 647.9 L560.8 647.7 L559.5 649.0 L558.1 648.9 L556.7 649.9 L555.4 649.8 L554.0 651.1 L552.7 651.4 L551.3 649.9 L549.9 651.6 L548.6 651.9 L547.3 650.6 L546.0 649.7 L544.7 650.0 L543.3 649.3 L542.0 649.6 L540.7 649.5 L539.4 648.0 L538.1 647.3 L536.8 647.3 L535.5 647.2 L534.2 646.9 L532.9 646.0 L531.6 645.0 L530.3 644.6 L529.0 645.2 L527.6 644.0 L526.3 642.6 L525.0 643.5 L523.7 643.2 L522.4 644.2 L521.0 643.1 L519.7 643.6 L518.4 643.4 L517.1 644.2 L515.7 645.3 L514.4 644.6 L513.1 644.3 L511.7 645.5 L510.4 644.0 L509.1 644.6 L507.8 645.6 L506.4 643.7 L505.0 644.9 L503.6 643.7 L502.2 642.7 L500.8 642.9 L499.5 643.0 L498.1 642.5 L496.7 642.5 L495.3 641.2 L493.9 641.2 L492.5 642.4 L491.2 641.0 L489.8 641.6 L488.4 641.4 L487.1 642.4 L485.7 644.3 L484.4 644.3 L483.0 644.5 L481.7 644.2 L480.3 645.4 L479.0 646.7 L477.6 646.6 L476.2 647.5 L474.9 648.7 L473.5 648.7 L472.2 649.2 L470.8 648.6 L469.5 649.1 L468.1 650.2 L466.7 649.0 L465.4 649.5 L464.0 649.0 L462.7 648.7 L461.3 647.2 L459.9 648.0 L458.6 647.0 L457.2 646.9 L455.8 644.9 L454.5 645.7 L453.1 644.6 L451.7 645.2 L450.4 644.8 L449.0 642.8 L447.7 642.8 L446.3 642.0 L444.9 642.0 L443.6 641.7 L442.2 642.5 L440.8 641.5 L439.4 641.6 L438.1 642.2 L436.7 641.5 L435.3 642.2 L433.9 643.3 L432.6 643.3 L431.2 642.0 L429.8 641.7 L428.4 643.4 L427.1 643.7 L425.7 643.0 L424.3 642.2 L423.0 642.5 L421.6 644.1 L420.3 644.3 L418.9 642.6 L417.6 643.1 L416.3 643.7 L414.9 643.6 L413.6 644.7 L412.2 644.1 L410.9 645.1 L409.5 644.0 L408.2 644.9 L406.9 646.0 L405.5 645.6 L404.2 644.6 L402.8 644.8 L401.5 646.0 L400.1 645.7 L398.8 645.8 L397.5 646.2 L396.2 646.6 L394.9 647.5 L393.6 646.3 L392.3 647.1 L391.0 646.7 L389.7 647.4 L388.4 647.9 L387.1 646.9 L385.7 647.8 L384.4 648.4 L383.1 647.2 L381.8 648.9 L380.5 648.4 L379.2 648.7 L377.9 649.1 L376.6 649.6 L375.3 648.3 L374.0 649.4 L372.7 648.6 L371.4 649.5 L370.0 648.9 L368.6 647.6 L367.2 647.6 L365.9 647.3 L364.5 647.1 L363.1 647.1 L361.7 645.4 L360.4 645.1 L359.0 644.9 L357.7 645.4 L356.3 645.5 L355.0 645.7 L353.6 644.4 L352.3 644.2 L350.9 645.8 L349.6 644.2 L348.2 645.0 L346.9 645.6 L345.5 645.3 L344.2 645.1 L342.8 646.2 L341.5 645.1 L340.1 645.6 L338.8 646.3 L337.4 645.0 L336.1 645.5 L334.7 645.8 L333.4 646.1 L332.0 645.4 L330.7 646.0 L329.4 645.2 L328.0 645.2 L326.7 645.7 L325.4 645.3 L324.0 646.9 L322.7 645.5 L321.4 645.5 L320.0 646.5 L318.7 646.4 L317.4 645.4 L316.0 646.6 L314.7 646.1 L313.4 645.6 L312.0 646.1 L310.7 645.6 L309.3 646.0 L308.0 647.5 L306.7 646.9 L305.3 648.1 L304.0 646.9 L302.7 647.1 L301.3 647.3 L300.0 648.9 L298.7 648.8 L297.3 648.0 L296.0 648.4 L294.7 650.2 L293.3 649.9 L292.0 650.9 L290.7 649.5 L289.3 650.9 L288.0 650.2 L286.7 651.7 L285.3 651.5 L283.9 651.6 L282.5 650.8 L281.2 652.3 L279.8 650.6 L278.4 650.6 L277.0 651.8 L275.7 650.7 L274.3 650.7 L272.9 651.5 L271.5 651.9 L270.1 652.4 L268.8 652.1 L267.4 650.8 L266.0 652.0 L264.6 651.8 L263.3 649.7 L261.9 650.4 L260.5 648.8 L259.2 648.3 L257.8 647.1 L256.4 648.0 L255.1 646.9 L253.7 647.1 L252.3 645.6 L250.9 644.4 L249.6 644.0 L248.2 643.5 L246.8 644.2 L245.5 642.1 L244.1 641.3 L242.8 642.0 L241.5 641.6 L240.2 642.5 L238.8 643.1 L237.5 643.3 L236.2 642.5 L234.9 642.6 L233.6 643.5 L232.3 644.1 L231.0 643.8 L229.6 644.2 L228.3 645.0 L227.0 643.7 L225.7 644.1 L224.4 644.7 L223.1 645.0 L221.8 645.9 L220.4 645.4 L219.1 645.8 L217.8 645.5 L216.4 647.0 L215.0 647.8 L213.7 647.5 L212.3 647.9 L210.9 649.0 L209.5 649.9 L208.1 651.8 L206.8 651.3 L205.4 651.5 L204.1 650.9 L202.8 651.0 L201.4 648.8 L200.1 649.5 L198.8 648.1 L197.4 647.1 L196.1 647.6 L194.8 648.3 L193.5 648.0 L192.2 647.1 L190.9 649.2 L189.6 648.2 L188.3 649.0 L186.9 649.4 L185.6 648.7 L184.3 649.2 L183.0 649.2 L181.7 649.0 L180.4 649.2 L179.1 650.7 L177.8 650.3 L176.5 651.4 L175.1 649.3 L173.7 649.2 L172.3 648.4 L171.0 649.3 L169.6 648.5 L168.2 648.1 L166.9 646.8 L165.5 645.4 L164.1 645.5 L162.7 644.5 L161.4 643.6 L160.0 644.1 L158.6 643.0 L157.2 642.6 L155.8 643.4 L154.4 644.2 L153.0 644.2 L151.5 643.2 L150.1 642.5 L148.7 643.8 L147.3 642.5 L145.9 643.3 L144.5 642.4 L143.1 644.2 L141.7 643.4 L140.4 643.3 L139.1 643.1 L137.8 643.7 L136.4 644.7 L135.1 643.7 L133.8 643.4 L132.4 644.1 L131.1 645.0 L129.8 644.0 L128.5 644.7 L127.1 645.3 L125.8 644.3 L124.5 645.3 L123.2 644.9 L121.8 644.2 L120.5 644.0 L119.2 645.7 L117.9 644.7 L116.6 644.5 L115.2 645.4 L113.9 644.7 L112.6 644.5 L111.3 644.0 L110.0 644.8 L108.7 643.8 L107.3 644.1 L106.0 644.6 L104.7 644.3 L103.4 643.3 L102.1 643.3 L100.8 644.2 L99.4 644.2 L98.1 642.9 L96.8 644.7 L95.5 642.9 L94.2 643.0 L92.9 642.9 L91.6 643.6 L90.2 643.9 L88.9 644.4 L87.6 643.0 L86.3 644.1 L85.0 642.9 L83.7 643.9 L82.4 643.2 L81.1 643.4 L79.8 642.8 L78.4 644.5 L77.1 643.6 L75.7 645.1 L74.4 644.6 L73.0 645.4 L71.7 645.8 L70.3 645.8 L69.0 646.8 L67.6 647.2 L66.3 646.3 L64.9 646.9 L63.6 647.4 L62.2 646.9 L60.9 647.3 L59.6 647.3 L58.2 647.8 L56.9 647.4 L55.5 647.8 L54.2 648.1 L52.8 648.4 L51.5 648.2 L50.1 649.1 L48.8 648.8 L47.4 649.3 L46.1 649.3 L44.7 649.3 L43.4 649.7 L42.0 649.8 L40.7 649.7 L39.3 650.1 L38.0 650.1 L36.6 650.3 L35.3 650.4 L33.9 650.7 L32.6 650.4 L31.2 650.7 L29.9 650.5 L28.5 651.2 L27.2 651.4 L25.8 651.5 L24.5 651.1 L23.1 651.6 L21.7 651.6 L20.3 651.4 L19.0 651.5 L17.6 651.8 L16.2 650.8 L14.8 649.4 L13.4 648.9 L12.0 647.8 L10.6 646.6 L9.3 645.9 L7.9 644.6 L6.5 643.7 L9.0 649.8 L10.4 650.8 L11.8 652.3 L13.1 653.0 L14.5 654.9 L15.9 655.5 L17.3 655.5 L18.7 657.2 L20.1 657.9 L21.5 657.4 L22.8 657.9 L24.2 657.7 L25.6 657.1 L27.0 656.7 L28.3 657.4 L29.7 657.3 L31.0 657.3 L32.4 656.7 L33.7 657.1 L35.1 656.5 L36.4 656.4 L37.8 655.8 L39.1 656.1 L40.5 655.9 L41.8 656.1 L43.2 655.5 L44.5 656.2 L45.9 656.8 L47.2 655.9 L48.6 655.7 L49.9 655.1 L51.3 655.2 L52.6 656.2 L54.0 655.5 L55.3 655.2 L56.7 654.9 L58.0 654.9 L59.4 654.2 L60.7 654.5 L62.1 653.3 L63.4 653.0 L64.7 653.4 L66.1 653.7 L67.4 652.6 L68.8 651.3 L70.1 652.8 L71.5 653.0 L72.8 651.7 L74.2 651.8 L75.5 652.1 L76.9 651.1 L78.2 651.2 L79.6 649.5 L80.9 649.7 L82.3 648.2 L83.6 648.5 L84.9 648.7 L86.2 648.6 L87.5 647.2 L88.8 648.7 L90.1 647.7 L91.4 648.6 L92.7 648.5 L94.1 648.8 L95.4 647.3 L96.7 647.9 L98.0 648.1 L99.3 649.9 L100.6 648.1 L101.9 649.8 L103.3 649.5 L104.6 649.1 L105.9 648.4 L107.2 649.8 L108.5 650.6 L109.8 649.8 L111.2 649.4 L112.5 650.4 L113.8 649.7 L115.1 649.7 L116.4 649.7 L117.7 650.5 L119.1 649.7 L120.4 650.0 L121.7 651.0 L123.0 649.0 L124.3 649.6 L125.7 650.5 L127.0 650.8 L128.3 649.2 L129.6 650.3 L131.0 650.0 L132.3 649.4 L133.6 650.3 L134.9 649.8 L136.3 649.1 L137.6 649.3 L138.9 650.5 L140.3 649.4 L141.6 648.2 L142.9 647.8 L144.2 647.6 L145.6 648.9 L147.0 647.1 L148.4 648.5 L149.8 647.6 L151.2 649.1 L152.6 648.1 L154.0 648.7 L155.5 649.1 L156.9 649.1 L158.3 648.3 L159.7 647.6 L161.1 648.3 L162.5 649.8 L163.9 648.9 L165.2 649.7 L166.6 651.1 L168.0 651.6 L169.4 652.9 L170.7 653.8 L172.1 654.3 L173.5 654.6 L174.8 653.8 L176.2 654.8 L177.6 655.0 L179.0 657.5 L180.3 656.1 L181.6 656.2 L182.9 654.1 L184.2 653.6 L185.5 653.3 L186.8 653.6 L188.1 652.8 L189.4 653.8 L190.8 653.8 L192.1 652.6 L193.4 654.0 L194.7 652.4 L196.0 653.6 L197.3 654.5 L198.6 654.4 L199.9 653.9 L201.3 654.6 L202.6 656.3 L203.9 656.4 L205.3 659.5 L206.6 659.1 L207.9 659.2 L209.3 658.5 L210.6 658.5 L212.0 656.8 L213.4 655.7 L214.8 655.1 L216.2 654.7 L217.5 655.1 L218.9 653.8 L220.3 652.4 L221.6 653.0 L222.9 652.3 L224.3 652.3 L225.6 651.3 L226.9 650.8 L228.2 650.0 L229.5 648.9 L230.8 649.7 L232.1 648.8 L233.5 649.0 L234.8 649.2 L236.1 648.7 L237.4 648.0 L238.7 648.2 L240.0 649.7 L241.3 649.7 L242.7 648.9 L244.0 647.6 L245.3 648.2 L246.6 647.2 L248.0 648.4 L249.3 650.5 L250.7 649.9 L252.1 649.9 L253.4 650.4 L254.8 651.1 L256.2 652.9 L257.6 652.1 L258.9 652.5 L260.3 650.9 L261.7 652.3 L263.0 652.2 L264.4 654.0 L265.8 653.1 L267.1 655.5 L268.5 655.6 L269.9 654.8 L271.3 656.5 L272.6 657.0 L274.0 656.7 L275.4 656.2 L276.8 655.1 L278.2 655.5 L279.5 656.8 L280.9 655.9 L282.3 656.4 L283.7 658.2 L285.0 657.2 L286.4 657.8 L287.8 657.1 L289.2 656.8 L290.5 655.5 L291.8 655.4 L293.2 654.2 L294.5 656.1 L295.8 655.2 L297.2 655.9 L298.5 653.5 L299.8 653.6 L301.2 653.9 L302.5 654.0 L303.8 652.2 L305.2 652.5 L306.5 652.7 L307.8 653.7 L309.2 652.9 L310.5 653.2 L311.8 651.8 L313.2 651.7 L314.5 651.9 L315.9 651.9 L317.2 653.0 L318.5 652.8 L319.9 651.0 L321.2 652.4 L322.5 652.7 L323.9 651.1 L325.2 651.3 L326.5 653.1 L327.9 651.5 L329.2 651.7 L330.5 650.9 L331.9 651.5 L333.2 652.5 L334.5 651.8 L335.9 652.0 L337.2 651.6 L338.6 650.7 L339.9 650.9 L341.3 651.8 L342.6 650.6 L344.0 650.5 L345.3 652.3 L346.7 650.7 L348.0 650.9 L349.4 651.0 L350.7 650.2 L352.1 648.9 L353.4 650.4 L354.8 648.6 L356.1 649.0 L357.5 649.9 L358.8 649.5 L360.2 649.9 L361.5 649.2 L362.9 649.7 L364.2 650.0 L365.6 652.4 L367.0 653.1 L368.4 653.1 L369.7 653.9 L371.1 654.6 L372.5 655.8 L373.9 655.9 L375.2 655.0 L376.5 656.3 L377.8 655.2 L379.1 656.1 L380.4 655.3 L381.7 655.3 L383.0 654.8 L384.3 654.9 L385.6 652.6 L386.9 654.3 L388.2 653.0 L389.6 652.3 L390.9 653.7 L392.2 653.4 L393.5 652.3 L394.8 652.8 L396.1 651.3 L397.4 653.0 L398.7 652.6 L400.0 651.7 L401.3 652.0 L402.6 651.6 L404.0 652.6 L405.3 651.6 L406.7 651.8 L408.0 652.3 L409.4 652.6 L410.7 651.4 L412.0 650.9 L413.4 651.4 L414.7 650.5 L416.1 650.7 L417.4 650.1 L418.8 649.8 L420.1 648.6 L421.4 648.1 L422.8 650.5 L424.1 649.8 L425.5 648.4 L426.8 647.8 L428.2 648.3 L429.6 649.1 L430.9 649.1 L432.3 646.9 L433.7 647.2 L435.1 648.3 L436.4 647.9 L437.8 646.9 L439.2 646.6 L440.6 648.0 L441.9 647.6 L443.3 647.2 L444.7 648.6 L446.1 648.0 L447.4 648.2 L448.8 648.1 L450.2 649.0 L451.5 648.9 L452.9 650.4 L454.2 650.6 L455.6 649.9 L457.0 651.4 L458.3 650.9 L459.7 652.8 L461.1 653.1 L462.4 653.8 L463.8 653.4 L465.2 654.3 L466.5 654.4 L467.9 654.5 L469.2 653.8 L470.6 655.7 L472.0 655.0 L473.3 654.2 L474.7 654.6 L476.0 654.5 L477.4 654.0 L478.7 653.4 L480.1 652.7 L481.5 652.5 L482.8 650.9 L484.2 649.2 L485.5 650.0 L486.9 650.0 L488.2 649.7 L489.6 648.3 L490.9 648.0 L492.3 648.2 L493.7 647.6 L495.0 649.0 L496.4 647.6 L497.8 647.6 L499.2 648.3 L500.6 649.0 L502.0 649.4 L503.3 649.0 L504.7 649.1 L506.1 650.3 L507.5 651.7 L508.9 650.6 L510.3 652.0 L511.6 650.5 L512.9 649.7 L514.2 650.6 L515.6 649.2 L516.9 649.3 L518.2 650.5 L519.6 650.0 L520.9 649.6 L522.2 649.7 L523.5 649.1 L524.9 650.3 L526.2 649.2 L527.5 648.8 L528.8 648.2 L530.1 649.9 L531.5 651.4 L532.8 650.5 L534.1 650.8 L535.4 652.1 L536.7 652.6 L538.0 653.4 L539.3 653.3 L540.6 653.2 L541.9 653.3 L543.2 655.2 L544.5 655.1 L545.8 654.6 L547.2 655.8 L548.5 654.9 L549.8 656.1 L551.1 657.1 L552.4 656.2 L553.8 654.1 L555.2 655.5 L556.5 655.2 L557.9 653.6 L559.2 654.1 L560.6 653.8 L562.0 654.2 L563.3 653.1 L564.7 653.0 L566.0 653.7 L567.4 653.7 L568.8 652.9 L570.1 654.5 L571.5 653.9 L572.8 652.9 L574.2 652.4 L575.6 651.7 L576.9 650.5 L578.3 649.9 L579.7 649.7 L581.1 650.4 L582.5 649.3 L583.9 649.3 L585.3 648.8 L586.7 648.0 L588.1 647.6 L589.5 647.4 L590.9 647.1 L592.2 648.0 L593.5 647.2 L594.8 649.3 L596.2 649.1 L597.5 650.3 L598.8 650.6 L600.1 650.8 L601.4 651.7 L602.8 652.2 L604.1 652.2 L605.4 651.9 L606.7 650.8 L608.1 652.1 L609.4 650.6 L610.7 649.9 L612.1 649.1 L613.4 650.6 L614.7 650.5 L616.1 649.9 L617.4 649.0 L618.7 649.7 L620.1 649.5 L621.4 649.0 L622.7 648.2 L624.0 646.8 L625.4 646.9 L626.7 648.1 L628.0 648.0 L629.3 648.4 L630.6 648.3 L631.9 648.8 L633.2 650.8 L634.6 649.9 L635.9 649.9 L637.2 650.7 L638.5 652.6 L639.8 652.4 L641.1 653.1 L642.4 654.1 L643.8 654.5 L645.2 654.6 L646.6 654.8 L648.0 653.6 L649.3 651.7 L650.7 651.4 L652.1 652.4 L653.5 652.5 L654.9 651.0 L656.3 651.5 L657.7 650.1 L659.1 648.9 L660.5 649.3 L661.9 648.5 L663.3 650.2 L664.7 648.7 L666.2 649.4 L667.6 648.6 L669.0 648.2 L670.3 648.1 L671.7 648.9 L673.1 649.9 L674.4 650.5 L675.8 650.3 L677.1 650.4 L678.5 650.3 L679.8 651.2 L681.2 651.5 L682.6 653.2 L683.9 654.5 L685.3 655.8 L686.6 654.4 L688.0 655.7 L689.4 655.5 L690.8 654.5 L692.2 654.5 L693.6 654.0 L695.0 654.6 L696.4 653.8 L697.8 654.3 L699.2 654.1 L700.6 652.7 L702.0 653.1 L703.4 652.4 L704.7 653.7 L706.1 652.4 L707.4 654.0 L708.8 652.8 L710.2 653.8 L711.5 654.3 L712.9 654.2 L714.3 653.5 L715.6 653.6 L717.0 653.7 L718.4 654.7 L719.7 656.0 L721.1 657.0 L722.5 657.2 L723.8 656.9 L725.2 657.7 L726.5 657.1 L727.9 657.2 L729.3 657.0 L730.6 656.6 L732.0 656.6 L733.3 657.3 L734.7 656.2 L736.1 657.1 L737.4 656.1 L738.8 656.1 L740.1 656.0 L741.5 654.7 L742.9 655.4 L744.2 655.5 L745.6 654.9 L746.9 655.8 L748.3 656.1 L749.7 655.4 L751.0 656.0 L752.3 656.0 L753.7 656.0 L755.0 655.8 L756.4 654.6 L757.7 653.7 L759.1 654.8 L760.4 654.1 L761.8 655.0 L763.1 654.1 L764.5 652.3 L765.8 651.5 L767.2 651.3 L768.5 652.7 L775.3 652.0 L774.1 652.0 L774.7 652.0 L773.1 652.0 L773.3 652.0 L771.7 652.0 L771.4 652.0 L770.1 652.0 L770.1 650.9 L770.3 649.4 L769.5 647.9 L777.2 647.9 L777.0 646.5 L776.0 645.0 L775.3 643.6 L774.8 642.2 L773.6 640.8 L773.3 639.4 L773.2 638.0 L773.4 636.6 L772.0 635.2 L770.0 633.7 L769.9 632.3 L769.6 630.9 L769.8 629.5 L770.9 628.1 L770.3 626.7 L770.3 625.3 L771.1 623.9 L770.9 622.4 L775.1 622.4 L774.6 621.1 L773.2 619.7 L773.4 618.3 L773.2 616.9 L772.8 615.5 L773.2 614.1 L771.7 612.8 L771.3 611.4 L772.0 610.0 L771.6 608.6 L772.3 607.2 L771.3 605.8 L772.1 604.4 L771.6 603.1 L772.4 601.7 L771.5 600.3 L784.0 600.3 L782.5 598.9 L781.9 597.5 L780.3 596.0 L779.8 594.6 L778.7 593.2 L779.2 591.8 L777.7 590.4 L778.0 589.0 L776.2 587.5 L775.1 586.1 L774.3 584.7 L774.3 583.3 L775.2 581.9 L774.0 580.5 L772.7 579.0 L772.2 577.6 L772.1 576.2 L770.9 574.8 L770.9 573.4 L778.8 573.4 L777.1 571.9 L775.3 570.4 L774.4 568.9 L774.0 567.4 L772.9 565.9 L772.5 564.4 L771.4 562.9 L770.4 561.4 L770.3 559.9 L769.9 558.4 L768.9 556.9 L768.5 555.4 L777.5 555.4 L777.7 553.9 L776.7 552.4 L775.4 551.0 L775.4 549.5 L774.3 548.0 L775.4 546.6 L774.1 545.1 L774.9 543.6 L774.6 542.2 L774.7 540.7 L776.2 540.7 L775.5 539.3 L775.2 537.9 L774.6 536.5 L774.0 535.2 L773.5 533.8 L773.1 532.4 L773.6 531.0 L773.1 529.6 L772.6 528.2 L772.5 526.8 L772.1 525.4 L771.9 524.0 L773.0 522.7 L772.7 521.3 L772.2 519.9 L771.9 518.5 L771.3 517.1 L775.8 517.1 L773.8 515.7 L773.1 514.3 L772.8 512.9 L772.3 511.5 L772.1 510.1 L772.3 508.7 L771.7 507.3 L770.5 505.9 L770.1 504.5 L770.4 503.2 L770.2 501.8 L770.0 500.4 L769.0 499.0 L769.0 497.6 L768.4 496.2 L767.8 494.8 L767.6 493.4 L767.8 492.0 L767.5 490.6 L777.4 490.6 L777.6 489.2 L776.4 487.7 L776.6 486.3 L774.0 484.9 L773.9 483.5 L774.2 482.0 L773.6 480.6 L772.0 479.2 L771.8 477.8 L771.7 476.3 L770.1 474.9 L770.5 473.5 L769.7 472.1 L769.8 470.6 L769.6 469.2 L768.3 467.8 L768.3 466.4 L767.8 464.9 L767.0 463.5 L780.7 463.5 L779.2 462.1 L779.3 460.8 L777.6 459.4 L777.3 458.0 L776.3 456.7 L776.1 455.3 L776.2 453.9 L775.6 452.6 L775.1 451.2 L774.1 449.8 L773.3 448.4 L772.7 447.1 L772.3 445.7 L770.9 444.3 L770.4 443.0 L770.0 441.6 L769.5 440.2 L768.8 438.9 L768.6 437.5 L775.6 437.5 L774.7 436.1 L773.4 434.7 L773.6 433.2 L773.0 431.8 L772.3 430.4 L771.8 429.0 L771.6 427.6 L771.3 426.2 L771.2 424.7 L771.4 423.3 L772.2 421.9 L771.1 420.5 L781.6 420.5 L779.2 419.0 L777.9 417.6 L777.5 416.1 L777.0 414.7 L775.4 413.2 L773.5 411.8 L772.8 410.3 L771.1 408.9 L770.4 407.4 L770.5 406.0 L775.7 406.0 L775.9 404.6 L775.9 403.2 L774.8 401.8 L774.4 400.4 L775.6 399.0 L775.3 397.6 L774.4 396.2 L774.5 394.8 L774.3 393.4 L773.4 392.0 L772.6 390.6 L771.4 389.2 L771.4 387.8 L770.2 386.4 L769.5 385.0 L770.0 383.6 L770.0 382.2 L769.4 380.8 L768.7 379.4 L770.0 378.0 L769.5 376.6 L769.8 375.2 L771.0 373.8 L776.9 373.8 L776.0 372.3 L774.7 370.9 L773.5 369.4 L772.1 368.0 L772.1 366.5 L771.2 365.0 L771.6 363.6 L771.7 362.1 L770.4 360.7 L769.7 359.2 L769.5 357.8 L769.6 356.3 L770.0 354.9 L770.3 353.4 L769.1 352.0 L768.2 350.5 L768.4 349.1 L775.8 349.1 L775.8 347.7 L774.9 346.3 L775.1 344.9 L775.3 343.5 L774.2 342.1 L774.1 340.7 L773.7 339.3 L773.2 338.0 L774.1 336.6 L772.3 335.2 L771.5 333.8 L771.1 332.4 L771.3 331.0 L771.2 329.6 L770.6 328.2 L770.4 326.8 L769.0 325.4 L770.6 324.0 L770.8 322.7 L775.2 322.7 L775.0 321.3 L774.4 319.9 L774.0 318.5 L774.6 317.1 L773.6 315.7 L772.6 314.3 L772.5 313.0 L773.3 311.6 L772.5 310.2 L772.8 308.8 L772.6 307.4 L772.1 306.0 L771.8 304.6 L771.6 303.3 L770.1 301.9 L770.0 300.5 L769.4 299.1 L768.4 297.7 L768.4 296.3 L768.1 294.9 L766.7 293.6 L767.7 292.2 L767.4 290.8 L777.2 290.8 L777.0 289.4 L777.3 288.0 L776.2 286.6 L775.0 285.2 L773.8 283.8 L772.1 282.4 L771.7 281.0 L771.0 279.6 L770.7 278.2 L770.2 276.8 L770.1 275.4 L770.4 274.1 L769.2 272.7 L768.7 271.3 L768.2 269.9 L767.9 268.5 L768.8 267.1 L767.1 265.7 L766.7 264.3 L767.5 262.9 L767.1 261.5 L766.9 260.1 L766.6 258.7 L778.5 258.7 L777.9 257.3 L777.0 255.9 L776.1 254.5 L775.8 253.1 L773.9 251.6 L773.5 250.2 L773.5 248.8 L773.2 247.4 L772.6 246.0 L771.9 244.6 L771.5 243.2 L771.6 241.8 L770.8 240.3 L779.6 240.3 L778.2 238.9 L777.0 237.4 L775.8 236.0 L775.1 234.6 L774.3 233.1 L773.8 231.7 L773.1 230.2 L772.8 228.8 L771.6 227.3 L770.8 225.9 L770.0 224.4 L768.8 223.0 L768.2 221.5 L768.2 220.1 L767.7 218.6 L766.6 217.2 L767.3 215.8 L774.9 215.8 L775.6 214.4 L774.4 213.0 L773.8 211.6 L774.1 210.2 L774.0 208.8 L772.3 207.4 L772.6 206.0 L772.6 204.6 L772.4 203.2 L772.1 201.8 L771.9 200.4 L772.1 199.0 L772.0 197.6 L771.6 196.2 L772.2 194.8 L771.5 193.4 L771.7 192.0 L770.9 190.6 L772.2 189.2 L772.0 187.8 L771.6 186.4 L777.0 186.4 L776.9 185.0 L776.8 183.6 L776.6 182.2 L776.3 180.8 L776.1 179.4 L775.2 178.0 L774.3 176.6 L774.1 175.2 L773.3 173.8 L773.1 172.4 L773.2 171.0 L772.1 169.6 L771.1 168.2 L771.5 166.8 L771.3 165.4 L771.8 164.0 L771.4 162.6 L771.4 161.2 L770.9 159.8 L769.9 158.4 L770.0 157.0 L769.8 155.6 L770.5 154.2 L770.6 152.8 L775.2 152.8 L774.3 151.5 L773.3 150.1 L772.2 148.8 L772.3 147.4 L770.6 146.0 L770.5 144.7 L769.9 143.3 L771.1 142.0 L771.0 140.6 L771.7 139.3 L770.4 137.9 L769.6 136.5 L769.5 135.2 L768.2 133.8 L767.4 132.5 L768.2 131.1 L767.2 129.8 L767.4 128.4 L767.6 127.0 L768.5 125.7 L768.4 124.3 L768.3 123.0 L768.6 121.6 L768.5 120.3 L769.7 118.9 L776.4 118.9 L775.1 117.5 L774.7 116.0 L775.2 114.6 L774.7 113.1 L774.3 111.7 L774.8 110.3 L775.4 108.8 L775.2 107.4 L776.0 105.9 L775.4 104.5 L774.5 103.1 L774.0 101.6 L774.8 100.2 L773.9 98.7 L774.5 97.3 L773.9 95.8 L773.3 94.4 L777.4 94.4 L776.4 93.0 L775.9 91.5 L774.8 90.1 L773.5 88.7 L772.2 87.2 L773.3 85.8 L772.0 84.4 L771.5 82.9 L771.3 81.5 L772.3 80.0 L780.8 80.0 L779.4 78.7 L777.1 77.3 L778.1 75.9 L776.5 74.5 L776.3 73.1 L775.6 71.7 L774.9 70.3 L775.1 68.9 L775.4 67.5 L775.0 66.1 L774.7 64.7 L775.4 63.4 L774.5 62.0 L775.7 60.6 L775.7 59.2 L774.5 57.8 L773.8 56.4 L774.5 55.0 L774.5 53.6 L773.9 52.2 L776.5 52.2 L774.9 50.7 L774.4 49.2 L773.6 47.7 L773.1 46.1 L771.3 44.6 L772.2 43.1 L771.9 41.6 L770.6 40.0 L769.7 38.5 L770.2 37.0 L769.0 35.5 L779.3 35.5 L777.3 34.1 L778.0 32.7 L778.2 31.3 L777.4 29.9 L776.2 28.5 L775.8 27.1 L776.7 25.7 L775.9 24.3 L775.2 22.9 L774.6 21.5 L773.6 20.1 L774.4 18.7 L773.3 17.4 L773.6 16.0 L772.8 14.6 L772.0 13.2 L772.5 11.8 L771.9 10.4 L771.7 9.0Z" fill="#6c6c6c" filter="url(#bl)"/><path d="M6.0 6.0 L766.0 6.0 L765.8 7.4 L766.2 8.8 L765.4 10.2 L766.2 11.6 L767.1 13.0 L767.1 14.4 L767.7 15.7 L767.2 17.1 L768.1 18.5 L768.2 19.9 L769.1 21.3 L769.6 22.7 L769.5 24.1 L770.2 25.5 L770.9 26.9 L772.2 28.3 L772.6 29.7 L772.5 31.1 L773.9 32.5 L764.1 32.5 L765.3 34.0 L764.7 35.5 L765.0 37.0 L766.2 38.6 L766.4 40.1 L766.1 41.6 L767.4 43.1 L767.3 44.7 L768.0 46.2 L768.0 47.7 L769.4 49.2 L766.6 49.2 L766.7 50.6 L766.6 52.0 L766.8 53.4 L766.9 54.8 L767.5 56.2 L768.1 57.6 L767.7 59.0 L768.9 60.4 L768.9 61.7 L769.2 63.1 L770.2 64.5 L770.2 65.9 L770.5 67.3 L771.1 68.7 L771.9 70.1 L771.6 71.5 L773.2 72.9 L772.6 74.3 L774.0 75.7 L774.7 77.0 L765.8 77.0 L765.3 78.5 L765.6 79.9 L766.1 81.4 L767.5 82.8 L767.1 84.2 L768.3 85.7 L769.1 87.1 L769.7 88.5 L769.7 90.0 L770.4 91.4 L766.0 91.4 L766.1 92.8 L766.2 94.3 L765.3 95.7 L766.5 97.2 L765.7 98.6 L766.1 100.1 L766.6 101.5 L767.2 102.9 L766.7 104.4 L767.6 105.8 L767.3 107.3 L767.3 108.7 L767.5 110.1 L767.6 111.6 L767.7 113.0 L768.1 114.5 L769.0 115.9 L762.6 115.9 L762.1 117.3 L762.0 118.6 L761.9 120.0 L762.5 121.3 L762.9 122.7 L762.7 124.0 L762.8 125.4 L762.6 126.8 L763.8 128.1 L763.0 129.5 L763.8 130.8 L764.5 132.2 L763.9 133.5 L764.9 134.9 L765.5 136.3 L765.4 137.6 L765.9 139.0 L765.4 140.3 L766.1 141.7 L766.1 143.0 L767.3 144.4 L767.0 145.8 L767.5 147.1 L768.6 148.5 L768.8 149.8 L764.0 149.8 L763.8 151.2 L763.7 152.6 L763.9 154.0 L763.8 155.4 L764.3 156.8 L765.3 158.2 L765.5 159.6 L765.4 161.0 L765.5 162.4 L765.6 163.8 L765.6 165.2 L766.2 166.6 L767.1 168.0 L767.6 169.4 L767.4 170.8 L768.3 172.2 L768.6 173.6 L769.0 175.0 L769.3 176.4 L769.9 177.8 L769.9 179.2 L770.7 180.6 L770.7 182.0 L771.4 183.4 L765.7 183.4 L765.4 184.8 L765.4 186.2 L764.8 187.6 L765.6 189.0 L765.4 190.4 L766.1 191.8 L766.0 193.2 L766.7 194.6 L766.7 196.0 L767.1 197.4 L766.8 198.8 L767.4 200.2 L767.8 201.6 L768.2 203.0 L767.9 204.4 L768.8 205.8 L769.2 207.2 L769.3 208.6 L769.9 210.0 L770.3 211.4 L770.1 212.8 L762.5 212.8 L762.1 214.2 L762.7 215.6 L763.1 217.1 L763.6 218.5 L763.5 220.0 L764.8 221.4 L765.2 222.9 L766.0 224.3 L766.5 225.8 L767.5 227.2 L768.5 228.7 L769.2 230.1 L770.2 231.6 L770.3 233.0 L771.4 234.4 L772.8 235.9 L774.0 237.3 L764.6 237.3 L765.2 238.8 L765.2 240.2 L765.4 241.6 L765.9 243.0 L766.6 244.4 L767.0 245.8 L767.6 247.2 L768.1 248.6 L769.3 250.1 L769.9 251.5 L770.9 252.9 L771.7 254.3 L772.1 255.7 L760.7 255.7 L761.0 257.1 L760.8 258.5 L761.9 259.9 L761.6 261.3 L761.4 262.7 L762.5 264.1 L762.2 265.5 L763.1 266.9 L763.2 268.3 L763.9 269.7 L764.8 271.1 L765.1 272.4 L765.1 273.8 L766.0 275.2 L766.4 276.6 L766.6 278.0 L766.8 279.4 L767.9 280.8 L768.5 282.2 L769.5 283.6 L770.1 285.0 L770.3 286.4 L770.7 287.8 L761.1 287.8 L761.2 289.2 L760.8 290.6 L761.5 291.9 L762.0 293.3 L761.6 294.7 L762.0 296.1 L762.0 297.5 L762.3 298.9 L763.5 300.3 L763.1 301.6 L764.1 303.0 L764.4 304.4 L764.4 305.8 L764.4 307.2 L765.7 308.6 L765.5 310.0 L765.8 311.3 L766.2 312.7 L767.4 314.1 L767.3 315.5 L767.5 316.9 L768.2 318.3 L768.3 319.7 L764.0 319.7 L764.1 321.0 L763.3 322.4 L764.1 323.8 L764.0 325.2 L765.0 326.6 L765.1 328.0 L764.8 329.4 L765.1 330.8 L765.3 332.2 L766.7 333.6 L766.2 335.0 L767.0 336.3 L767.2 337.7 L767.9 339.1 L768.3 340.5 L768.9 341.9 L768.6 343.3 L769.9 344.7 L769.8 346.1 L763.1 346.1 L763.1 347.5 L763.1 349.0 L763.8 350.4 L763.9 351.9 L763.6 353.3 L764.2 354.8 L764.8 356.2 L765.8 357.7 L766.2 359.1 L766.3 360.6 L766.1 362.0 L767.5 363.5 L767.7 365.0 L768.4 366.4 L769.1 367.9 L769.6 369.3 L770.1 370.8 L763.7 370.8 L763.0 372.2 L763.3 373.6 L764.1 375.0 L763.3 376.4 L764.5 377.8 L764.5 379.2 L764.5 380.6 L764.6 382.0 L765.5 383.4 L765.9 384.8 L765.3 386.2 L766.1 387.6 L766.5 389.0 L766.8 390.4 L767.0 391.8 L767.2 393.2 L768.1 394.6 L768.8 396.0 L768.4 397.4 L769.0 398.8 L770.2 400.2 L770.6 401.6 L770.9 403.0 L765.9 403.0 L765.9 404.4 L765.6 405.9 L767.3 407.3 L767.4 408.8 L768.9 410.2 L770.3 411.7 L771.2 413.1 L771.7 414.6 L773.2 416.0 L775.4 417.5 L764.3 417.5 L765.0 418.9 L764.5 420.3 L765.0 421.7 L765.7 423.2 L765.8 424.6 L766.3 426.0 L767.5 427.4 L768.3 428.8 L769.2 430.2 L769.0 431.7 L770.1 433.1 L770.7 434.5 L763.8 434.5 L763.5 435.9 L764.5 437.2 L764.2 438.6 L765.1 440.0 L765.4 441.3 L766.3 442.7 L766.4 444.1 L767.0 445.4 L767.1 446.8 L768.1 448.2 L768.3 449.6 L769.6 450.9 L770.0 452.3 L770.2 453.7 L771.1 455.0 L772.0 456.4 L773.2 457.8 L773.4 459.1 L774.8 460.5 L761.0 460.5 L761.2 461.9 L762.0 463.4 L761.9 464.8 L763.0 466.2 L763.0 467.6 L763.3 469.1 L764.4 470.5 L764.0 471.9 L765.4 473.3 L765.2 474.8 L766.0 476.2 L767.7 477.6 L768.0 479.0 L768.2 480.5 L768.9 481.9 L770.7 483.3 L771.2 484.7 L772.2 486.2 L772.2 487.6 L762.9 487.6 L763.3 489.0 L763.2 490.4 L763.4 491.8 L763.3 493.2 L764.4 494.6 L764.5 496.0 L764.9 497.4 L764.8 498.8 L765.7 500.2 L765.6 501.5 L766.1 502.9 L766.5 504.3 L767.1 505.7 L767.1 507.1 L767.2 508.5 L767.6 509.9 L768.3 511.3 L768.6 512.7 L770.1 514.1 L765.5 514.1 L766.1 515.5 L765.8 516.9 L765.7 518.3 L765.8 519.7 L765.5 521.0 L765.7 522.4 L765.8 523.8 L766.2 525.2 L766.4 526.6 L767.1 528.0 L766.4 529.4 L766.7 530.8 L766.9 532.2 L767.0 533.5 L767.3 534.9 L767.5 536.3 L768.0 537.7 L767.1 537.7 L766.9 539.2 L767.1 540.6 L767.2 542.1 L768.1 543.6 L767.5 545.0 L768.6 546.5 L768.7 548.0 L769.6 549.4 L770.3 550.9 L770.2 552.4 L760.6 552.4 L761.2 553.9 L762.3 555.4 L762.0 556.9 L762.6 558.4 L763.4 559.9 L763.9 561.4 L765.2 562.9 L766.0 564.4 L766.2 565.9 L767.3 567.4 L768.8 568.9 L770.1 570.4 L763.0 570.4 L763.2 571.8 L764.3 573.2 L764.2 574.6 L764.1 576.0 L765.2 577.5 L766.2 578.9 L766.1 580.3 L766.5 581.7 L766.8 583.1 L767.4 584.5 L769.0 586.0 L769.2 587.4 L770.5 588.8 L770.2 590.2 L771.2 591.6 L771.7 593.0 L773.0 594.5 L773.4 595.9 L774.5 597.3 L762.3 597.3 L763.5 598.7 L762.7 600.1 L763.3 601.4 L763.4 602.8 L763.8 604.2 L763.6 605.6 L764.2 607.0 L764.3 608.4 L765.2 609.8 L766.1 611.1 L766.1 612.5 L766.9 613.9 L766.5 615.3 L766.8 616.7 L767.9 618.1 L768.3 619.4 L763.5 619.4 L763.9 620.9 L763.4 622.3 L763.8 623.7 L764.6 625.1 L764.3 626.5 L764.6 627.9 L765.2 629.3 L765.5 630.7 L766.8 632.2 L767.4 633.6 L767.4 635.0 L767.8 636.4 L768.4 637.8 L769.2 639.2 L769.7 640.6 L770.8 642.0 L771.7 643.5 L772.1 644.9 L764.8 644.9 L765.0 646.4 L765.3 647.9 L765.2 649.0 L765.9 649.0 L766.1 649.0 L767.0 649.0 L767.1 649.0 L767.9 649.0 L768.1 649.0 L768.6 649.0 L766.0 647.3 L764.7 646.6 L763.3 647.0 L762.0 647.1 L760.6 648.5 L759.3 649.1 L757.9 647.9 L756.6 649.2 L755.2 648.5 L753.9 649.4 L752.5 650.0 L751.2 649.7 L749.8 650.2 L748.5 649.5 L747.2 649.0 L745.8 650.1 L744.4 650.3 L743.1 649.6 L741.7 650.1 L740.4 650.1 L739.0 649.6 L737.6 650.2 L736.3 650.5 L734.9 650.7 L733.6 651.3 L732.2 650.8 L730.8 652.0 L729.5 651.8 L728.1 652.1 L726.8 651.7 L725.4 651.8 L724.0 651.6 L722.7 651.9 L721.3 650.9 L720.0 651.2 L718.6 651.2 L717.2 650.8 L715.9 650.1 L714.5 649.6 L713.1 649.4 L711.8 649.8 L710.4 650.1 L709.0 650.3 L707.7 650.1 L706.3 649.1 L704.9 650.2 L703.6 648.7 L702.2 649.5 L700.9 648.0 L699.5 649.2 L698.1 649.2 L696.7 649.8 L695.3 649.8 L693.9 649.5 L692.5 649.9 L691.1 649.9 L689.7 649.7 L688.3 649.0 L686.9 649.7 L685.5 650.6 L684.1 649.4 L682.8 650.3 L681.4 648.9 L680.1 648.0 L678.7 646.6 L677.3 646.8 L676.0 645.8 L674.6 646.2 L673.3 646.1 L671.9 645.6 L670.6 644.4 L669.2 643.4 L667.8 642.2 L666.5 642.8 L665.1 642.6 L663.7 643.0 L662.2 642.3 L660.8 643.4 L659.4 642.1 L658.0 642.4 L656.6 642.3 L655.2 643.1 L653.8 644.2 L652.4 643.2 L651.0 644.6 L649.6 645.4 L648.2 644.8 L646.8 645.0 L645.5 646.5 L644.1 647.6 L642.7 648.2 L641.3 648.4 L639.9 648.3 L638.6 647.7 L637.3 647.4 L636.0 647.6 L634.7 645.8 L633.4 645.2 L632.1 645.3 L630.7 645.4 L629.4 643.3 L628.1 642.4 L626.8 642.1 L625.5 642.4 L624.2 641.9 L622.9 641.4 L621.5 641.7 L620.2 642.7 L618.9 643.1 L617.6 643.5 L616.2 643.9 L614.9 642.8 L613.6 644.0 L612.2 644.9 L610.9 645.5 L609.6 644.5 L608.2 645.8 L606.9 645.7 L605.6 646.6 L604.2 645.4 L602.9 646.7 L601.6 647.2 L600.3 646.8 L598.9 646.3 L597.6 645.8 L596.3 645.0 L595.0 644.2 L593.7 643.6 L592.3 643.9 L591.0 642.2 L589.7 642.8 L588.4 642.0 L587.0 642.6 L585.6 642.9 L584.2 643.1 L582.8 643.9 L581.4 644.3 L580.0 644.1 L578.6 645.1 L577.2 643.8 L575.8 644.1 L574.4 644.4 L573.1 645.0 L571.7 645.7 L570.3 646.1 L569.0 646.9 L567.6 647.4 L566.3 646.4 L564.9 647.3 L563.5 647.9 L562.2 647.9 L560.8 647.7 L559.5 649.0 L558.1 648.9 L556.7 649.9 L555.4 649.8 L554.0 651.1 L552.7 651.4 L551.3 649.9 L549.9 651.6 L548.6 651.9 L547.3 650.6 L546.0 649.7 L544.7 650.0 L543.3 649.3 L542.0 649.6 L540.7 649.5 L539.4 648.0 L538.1 647.3 L536.8 647.3 L535.5 647.2 L534.2 646.9 L532.9 646.0 L531.6 645.0 L530.3 644.6 L529.0 645.2 L527.6 644.0 L526.3 642.6 L525.0 643.5 L523.7 643.2 L522.4 644.2 L521.0 643.1 L519.7 643.6 L518.4 643.4 L517.1 644.2 L515.7 645.3 L514.4 644.6 L513.1 644.3 L511.7 645.5 L510.4 644.0 L509.1 644.6 L507.8 645.6 L506.4 643.7 L505.0 644.9 L503.6 643.7 L502.2 642.7 L500.8 642.9 L499.5 643.0 L498.1 642.5 L496.7 642.5 L495.3 641.2 L493.9 641.2 L492.5 642.4 L491.2 641.0 L489.8 641.6 L488.4 641.4 L487.1 642.4 L485.7 644.3 L484.4 644.3 L483.0 644.5 L481.7 644.2 L480.3 645.4 L479.0 646.7 L477.6 646.6 L476.2 647.5 L474.9 648.7 L473.5 648.7 L472.2 649.2 L470.8 648.6 L469.5 649.1 L468.1 650.2 L466.7 649.0 L465.4 649.5 L464.0 649.0 L462.7 648.7 L461.3 647.2 L459.9 648.0 L458.6 647.0 L457.2 646.9 L455.8 644.9 L454.5 645.7 L453.1 644.6 L451.7 645.2 L450.4 644.8 L449.0 642.8 L447.7 642.8 L446.3 642.0 L444.9 642.0 L443.6 641.7 L442.2 642.5 L440.8 641.5 L439.4 641.6 L438.1 642.2 L436.7 641.5 L435.3 642.2 L433.9 643.3 L432.6 643.3 L431.2 642.0 L429.8 641.7 L428.4 643.4 L427.1 643.7 L425.7 643.0 L424.3 642.2 L423.0 642.5 L421.6 644.1 L420.3 644.3 L418.9 642.6 L417.6 643.1 L416.3 643.7 L414.9 643.6 L413.6 644.7 L412.2 644.1 L410.9 645.1 L409.5 644.0 L408.2 644.9 L406.9 646.0 L405.5 645.6 L404.2 644.6 L402.8 644.8 L401.5 646.0 L400.1 645.7 L398.8 645.8 L397.5 646.2 L396.2 646.6 L394.9 647.5 L393.6 646.3 L392.3 647.1 L391.0 646.7 L389.7 647.4 L388.4 647.9 L387.1 646.9 L385.7 647.8 L384.4 648.4 L383.1 647.2 L381.8 648.9 L380.5 648.4 L379.2 648.7 L377.9 649.1 L376.6 649.6 L375.3 648.3 L374.0 649.4 L372.7 648.6 L371.4 649.5 L370.0 648.9 L368.6 647.6 L367.2 647.6 L365.9 647.3 L364.5 647.1 L363.1 647.1 L361.7 645.4 L360.4 645.1 L359.0 644.9 L357.7 645.4 L356.3 645.5 L355.0 645.7 L353.6 644.4 L352.3 644.2 L350.9 645.8 L349.6 644.2 L348.2 645.0 L346.9 645.6 L345.5 645.3 L344.2 645.1 L342.8 646.2 L341.5 645.1 L340.1 645.6 L338.8 646.3 L337.4 645.0 L336.1 645.5 L334.7 645.8 L333.4 646.1 L332.0 645.4 L330.7 646.0 L329.4 645.2 L328.0 645.2 L326.7 645.7 L325.4 645.3 L324.0 646.9 L322.7 645.5 L321.4 645.5 L320.0 646.5 L318.7 646.4 L317.4 645.4 L316.0 646.6 L314.7 646.1 L313.4 645.6 L312.0 646.1 L310.7 645.6 L309.3 646.0 L308.0 647.5 L306.7 646.9 L305.3 648.1 L304.0 646.9 L302.7 647.1 L301.3 647.3 L300.0 648.9 L298.7 648.8 L297.3 648.0 L296.0 648.4 L294.7 650.2 L293.3 649.9 L292.0 650.9 L290.7 649.5 L289.3 650.9 L288.0 650.2 L286.7 651.7 L285.3 651.5 L283.9 651.6 L282.5 650.8 L281.2 652.3 L279.8 650.6 L278.4 650.6 L277.0 651.8 L275.7 650.7 L274.3 650.7 L272.9 651.5 L271.5 651.9 L270.1 652.4 L268.8 652.1 L267.4 650.8 L266.0 652.0 L264.6 651.8 L263.3 649.7 L261.9 650.4 L260.5 648.8 L259.2 648.3 L257.8 647.1 L256.4 648.0 L255.1 646.9 L253.7 647.1 L252.3 645.6 L250.9 644.4 L249.6 644.0 L248.2 643.5 L246.8 644.2 L245.5 642.1 L244.1 641.3 L242.8 642.0 L241.5 641.6 L240.2 642.5 L238.8 643.1 L237.5 643.3 L236.2 642.5 L234.9 642.6 L233.6 643.5 L232.3 644.1 L231.0 643.8 L229.6 644.2 L228.3 645.0 L227.0 643.7 L225.7 644.1 L224.4 644.7 L223.1 645.0 L221.8 645.9 L220.4 645.4 L219.1 645.8 L217.8 645.5 L216.4 647.0 L215.0 647.8 L213.7 647.5 L212.3 647.9 L210.9 649.0 L209.5 649.9 L208.1 651.8 L206.8 651.3 L205.4 651.5 L204.1 650.9 L202.8 651.0 L201.4 648.8 L200.1 649.5 L198.8 648.1 L197.4 647.1 L196.1 647.6 L194.8 648.3 L193.5 648.0 L192.2 647.1 L190.9 649.2 L189.6 648.2 L188.3 649.0 L186.9 649.4 L185.6 648.7 L184.3 649.2 L183.0 649.2 L181.7 649.0 L180.4 649.2 L179.1 650.7 L177.8 650.3 L176.5 651.4 L175.1 649.3 L173.7 649.2 L172.3 648.4 L171.0 649.3 L169.6 648.5 L168.2 648.1 L166.9 646.8 L165.5 645.4 L164.1 645.5 L162.7 644.5 L161.4 643.6 L160.0 644.1 L158.6 643.0 L157.2 642.6 L155.8 643.4 L154.4 644.2 L153.0 644.2 L151.5 643.2 L150.1 642.5 L148.7 643.8 L147.3 642.5 L145.9 643.3 L144.5 642.4 L143.1 644.2 L141.7 643.4 L140.4 643.3 L139.1 643.1 L137.8 643.7 L136.4 644.7 L135.1 643.7 L133.8 643.4 L132.4 644.1 L131.1 645.0 L129.8 644.0 L128.5 644.7 L127.1 645.3 L125.8 644.3 L124.5 645.3 L123.2 644.9 L121.8 644.2 L120.5 644.0 L119.2 645.7 L117.9 644.7 L116.6 644.5 L115.2 645.4 L113.9 644.7 L112.6 644.5 L111.3 644.0 L110.0 644.8 L108.7 643.8 L107.3 644.1 L106.0 644.6 L104.7 644.3 L103.4 643.3 L102.1 643.3 L100.8 644.2 L99.4 644.2 L98.1 642.9 L96.8 644.7 L95.5 642.9 L94.2 643.0 L92.9 642.9 L91.6 643.6 L90.2 643.9 L88.9 644.4 L87.6 643.0 L86.3 644.1 L85.0 642.9 L83.7 643.9 L82.4 643.2 L81.1 643.4 L79.8 642.8 L78.4 644.5 L77.1 643.6 L75.7 645.1 L74.4 644.6 L73.0 645.4 L71.7 645.8 L70.3 645.8 L69.0 646.8 L67.6 647.2 L66.3 646.3 L64.9 646.9 L63.6 647.4 L62.2 646.9 L60.9 647.3 L59.6 647.3 L58.2 647.8 L56.9 647.4 L55.5 647.8 L54.2 648.1 L52.8 648.4 L51.5 648.2 L50.1 649.1 L48.8 648.8 L47.4 649.3 L46.1 649.3 L44.7 649.3 L43.4 649.7 L42.0 649.8 L40.7 649.7 L39.3 650.1 L38.0 650.1 L36.6 650.3 L35.3 650.4 L33.9 650.7 L32.6 650.4 L31.2 650.7 L29.9 650.5 L28.5 651.2 L27.2 651.4 L25.8 651.5 L24.5 651.1 L23.1 651.6 L21.7 651.6 L20.3 651.4 L19.0 651.5 L17.6 651.8 L16.2 650.8 L14.8 649.4 L13.4 648.9 L12.0 647.8 L10.6 646.6 L9.3 645.9 L7.9 644.6 L6.5 643.7 L6.0 645.0Z" fill="#fff"/><path d="M766.0 6.0 L765.8 7.4 L766.2 8.8 L765.4 10.2 L766.2 11.6 L767.1 13.0 L767.1 14.4 L767.7 15.7 L767.2 17.1 L768.1 18.5 L768.2 19.9 L769.1 21.3 L769.6 22.7 L769.5 24.1 L770.2 25.5 L770.9 26.9 L772.2 28.3 L772.6 29.7 L772.5 31.1 L773.9 32.5 L764.1 32.5 L765.3 34.0 L764.7 35.5 L765.0 37.0 L766.2 38.6 L766.4 40.1 L766.1 41.6 L767.4 43.1 L767.3 44.7 L768.0 46.2 L768.0 47.7 L769.4 49.2 L766.6 49.2 L766.7 50.6 L766.6 52.0 L766.8 53.4 L766.9 54.8 L767.5 56.2 L768.1 57.6 L767.7 59.0 L768.9 60.4 L768.9 61.7 L769.2 63.1 L770.2 64.5 L770.2 65.9 L770.5 67.3 L771.1 68.7 L771.9 70.1 L771.6 71.5 L773.2 72.9 L772.6 74.3 L774.0 75.7 L774.7 77.0 L765.8 77.0 L765.3 78.5 L765.6 79.9 L766.1 81.4 L767.5 82.8 L767.1 84.2 L768.3 85.7 L769.1 87.1 L769.7 88.5 L769.7 90.0 L770.4 91.4 L766.0 91.4 L766.1 92.8 L766.2 94.3 L765.3 95.7 L766.5 97.2 L765.7 98.6 L766.1 100.1 L766.6 101.5 L767.2 102.9 L766.7 104.4 L767.6 105.8 L767.3 107.3 L767.3 108.7 L767.5 110.1 L767.6 111.6 L767.7 113.0 L768.1 114.5 L769.0 115.9 L762.6 115.9 L762.1 117.3 L762.0 118.6 L761.9 120.0 L762.5 121.3 L762.9 122.7 L762.7 124.0 L762.8 125.4 L762.6 126.8 L763.8 128.1 L763.0 129.5 L763.8 130.8 L764.5 132.2 L763.9 133.5 L764.9 134.9 L765.5 136.3 L765.4 137.6 L765.9 139.0 L765.4 140.3 L766.1 141.7 L766.1 143.0 L767.3 144.4 L767.0 145.8 L767.5 147.1 L768.6 148.5 L768.8 149.8 L764.0 149.8 L763.8 151.2 L763.7 152.6 L763.9 154.0 L763.8 155.4 L764.3 156.8 L765.3 158.2 L765.5 159.6 L765.4 161.0 L765.5 162.4 L765.6 163.8 L765.6 165.2 L766.2 166.6 L767.1 168.0 L767.6 169.4 L767.4 170.8 L768.3 172.2 L768.6 173.6 L769.0 175.0 L769.3 176.4 L769.9 177.8 L769.9 179.2 L770.7 180.6 L770.7 182.0 L771.4 183.4 L765.7 183.4 L765.4 184.8 L765.4 186.2 L764.8 187.6 L765.6 189.0 L765.4 190.4 L766.1 191.8 L766.0 193.2 L766.7 194.6 L766.7 196.0 L767.1 197.4 L766.8 198.8 L767.4 200.2 L767.8 201.6 L768.2 203.0 L767.9 204.4 L768.8 205.8 L769.2 207.2 L769.3 208.6 L769.9 210.0 L770.3 211.4 L770.1 212.8 L762.5 212.8 L762.1 214.2 L762.7 215.6 L763.1 217.1 L763.6 218.5 L763.5 220.0 L764.8 221.4 L765.2 222.9 L766.0 224.3 L766.5 225.8 L767.5 227.2 L768.5 228.7 L769.2 230.1 L770.2 231.6 L770.3 233.0 L771.4 234.4 L772.8 235.9 L774.0 237.3 L764.6 237.3 L765.2 238.8 L765.2 240.2 L765.4 241.6 L765.9 243.0 L766.6 244.4 L767.0 245.8 L767.6 247.2 L768.1 248.6 L769.3 250.1 L769.9 251.5 L770.9 252.9 L771.7 254.3 L772.1 255.7 L760.7 255.7 L761.0 257.1 L760.8 258.5 L761.9 259.9 L761.6 261.3 L761.4 262.7 L762.5 264.1 L762.2 265.5 L763.1 266.9 L763.2 268.3 L763.9 269.7 L764.8 271.1 L765.1 272.4 L765.1 273.8 L766.0 275.2 L766.4 276.6 L766.6 278.0 L766.8 279.4 L767.9 280.8 L768.5 282.2 L769.5 283.6 L770.1 285.0 L770.3 286.4 L770.7 287.8 L761.1 287.8 L761.2 289.2 L760.8 290.6 L761.5 291.9 L762.0 293.3 L761.6 294.7 L762.0 296.1 L762.0 297.5 L762.3 298.9 L763.5 300.3 L763.1 301.6 L764.1 303.0 L764.4 304.4 L764.4 305.8 L764.4 307.2 L765.7 308.6 L765.5 310.0 L765.8 311.3 L766.2 312.7 L767.4 314.1 L767.3 315.5 L767.5 316.9 L768.2 318.3 L768.3 319.7 L764.0 319.7 L764.1 321.0 L763.3 322.4 L764.1 323.8 L764.0 325.2 L765.0 326.6 L765.1 328.0 L764.8 329.4 L765.1 330.8 L765.3 332.2 L766.7 333.6 L766.2 335.0 L767.0 336.3 L767.2 337.7 L767.9 339.1 L768.3 340.5 L768.9 341.9 L768.6 343.3 L769.9 344.7 L769.8 346.1 L763.1 346.1 L763.1 347.5 L763.1 349.0 L763.8 350.4 L763.9 351.9 L763.6 353.3 L764.2 354.8 L764.8 356.2 L765.8 357.7 L766.2 359.1 L766.3 360.6 L766.1 362.0 L767.5 363.5 L767.7 365.0 L768.4 366.4 L769.1 367.9 L769.6 369.3 L770.1 370.8 L763.7 370.8 L763.0 372.2 L763.3 373.6 L764.1 375.0 L763.3 376.4 L764.5 377.8 L764.5 379.2 L764.5 380.6 L764.6 382.0 L765.5 383.4 L765.9 384.8 L765.3 386.2 L766.1 387.6 L766.5 389.0 L766.8 390.4 L767.0 391.8 L767.2 393.2 L768.1 394.6 L768.8 396.0 L768.4 397.4 L769.0 398.8 L770.2 400.2 L770.6 401.6 L770.9 403.0 L765.9 403.0 L765.9 404.4 L765.6 405.9 L767.3 407.3 L767.4 408.8 L768.9 410.2 L770.3 411.7 L771.2 413.1 L771.7 414.6 L773.2 416.0 L775.4 417.5 L764.3 417.5 L765.0 418.9 L764.5 420.3 L765.0 421.7 L765.7 423.2 L765.8 424.6 L766.3 426.0 L767.5 427.4 L768.3 428.8 L769.2 430.2 L769.0 431.7 L770.1 433.1 L770.7 434.5 L763.8 434.5 L763.5 435.9 L764.5 437.2 L764.2 438.6 L765.1 440.0 L765.4 441.3 L766.3 442.7 L766.4 444.1 L767.0 445.4 L767.1 446.8 L768.1 448.2 L768.3 449.6 L769.6 450.9 L770.0 452.3 L770.2 453.7 L771.1 455.0 L772.0 456.4 L773.2 457.8 L773.4 459.1 L774.8 460.5 L761.0 460.5 L761.2 461.9 L762.0 463.4 L761.9 464.8 L763.0 466.2 L763.0 467.6 L763.3 469.1 L764.4 470.5 L764.0 471.9 L765.4 473.3 L765.2 474.8 L766.0 476.2 L767.7 477.6 L768.0 479.0 L768.2 480.5 L768.9 481.9 L770.7 483.3 L771.2 484.7 L772.2 486.2 L772.2 487.6 L762.9 487.6 L763.3 489.0 L763.2 490.4 L763.4 491.8 L763.3 493.2 L764.4 494.6 L764.5 496.0 L764.9 497.4 L764.8 498.8 L765.7 500.2 L765.6 501.5 L766.1 502.9 L766.5 504.3 L767.1 505.7 L767.1 507.1 L767.2 508.5 L767.6 509.9 L768.3 511.3 L768.6 512.7 L770.1 514.1 L765.5 514.1 L766.1 515.5 L765.8 516.9 L765.7 518.3 L765.8 519.7 L765.5 521.0 L765.7 522.4 L765.8 523.8 L766.2 525.2 L766.4 526.6 L767.1 528.0 L766.4 529.4 L766.7 530.8 L766.9 532.2 L767.0 533.5 L767.3 534.9 L767.5 536.3 L768.0 537.7 L767.1 537.7 L766.9 539.2 L767.1 540.6 L767.2 542.1 L768.1 543.6 L767.5 545.0 L768.6 546.5 L768.7 548.0 L769.6 549.4 L770.3 550.9 L770.2 552.4 L760.6 552.4 L761.2 553.9 L762.3 555.4 L762.0 556.9 L762.6 558.4 L763.4 559.9 L763.9 561.4 L765.2 562.9 L766.0 564.4 L766.2 565.9 L767.3 567.4 L768.8 568.9 L770.1 570.4 L763.0 570.4 L763.2 571.8 L764.3 573.2 L764.2 574.6 L764.1 576.0 L765.2 577.5 L766.2 578.9 L766.1 580.3 L766.5 581.7 L766.8 583.1 L767.4 584.5 L769.0 586.0 L769.2 587.4 L770.5 588.8 L770.2 590.2 L771.2 591.6 L771.7 593.0 L773.0 594.5 L773.4 595.9 L774.5 597.3 L762.3 597.3 L763.5 598.7 L762.7 600.1 L763.3 601.4 L763.4 602.8 L763.8 604.2 L763.6 605.6 L764.2 607.0 L764.3 608.4 L765.2 609.8 L766.1 611.1 L766.1 612.5 L766.9 613.9 L766.5 615.3 L766.8 616.7 L767.9 618.1 L768.3 619.4 L763.5 619.4 L763.9 620.9 L763.4 622.3 L763.8 623.7 L764.6 625.1 L764.3 626.5 L764.6 627.9 L765.2 629.3 L765.5 630.7 L766.8 632.2 L767.4 633.6 L767.4 635.0 L767.8 636.4 L768.4 637.8 L769.2 639.2 L769.7 640.6 L770.8 642.0 L771.7 643.5 L772.1 644.9 L764.8 644.9 L765.0 646.4 L765.3 647.9 L765.2 649.0 L765.9 649.0 L766.1 649.0 L767.0 649.0 L767.1 649.0 L767.9 649.0 L768.1 649.0 L768.6 649.0 L766.0 647.3 L764.7 646.6 L763.3 647.0 L762.0 647.1 L760.6 648.5 L759.3 649.1 L757.9 647.9 L756.6 649.2 L755.2 648.5 L753.9 649.4 L752.5 650.0 L751.2 649.7 L749.8 650.2 L748.5 649.5 L747.2 649.0 L745.8 650.1 L744.4 650.3 L743.1 649.6 L741.7 650.1 L740.4 650.1 L739.0 649.6 L737.6 650.2 L736.3 650.5 L734.9 650.7 L733.6 651.3 L732.2 650.8 L730.8 652.0 L729.5 651.8 L728.1 652.1 L726.8 651.7 L725.4 651.8 L724.0 651.6 L722.7 651.9 L721.3 650.9 L720.0 651.2 L718.6 651.2 L717.2 650.8 L715.9 650.1 L714.5 649.6 L713.1 649.4 L711.8 649.8 L710.4 650.1 L709.0 650.3 L707.7 650.1 L706.3 649.1 L704.9 650.2 L703.6 648.7 L702.2 649.5 L700.9 648.0 L699.5 649.2 L698.1 649.2 L696.7 649.8 L695.3 649.8 L693.9 649.5 L692.5 649.9 L691.1 649.9 L689.7 649.7 L688.3 649.0 L686.9 649.7 L685.5 650.6 L684.1 649.4 L682.8 650.3 L681.4 648.9 L680.1 648.0 L678.7 646.6 L677.3 646.8 L676.0 645.8 L674.6 646.2 L673.3 646.1 L671.9 645.6 L670.6 644.4 L669.2 643.4 L667.8 642.2 L666.5 642.8 L665.1 642.6 L663.7 643.0 L662.2 642.3 L660.8 643.4 L659.4 642.1 L658.0 642.4 L656.6 642.3 L655.2 643.1 L653.8 644.2 L652.4 643.2 L651.0 644.6 L649.6 645.4 L648.2 644.8 L646.8 645.0 L645.5 646.5 L644.1 647.6 L642.7 648.2 L641.3 648.4 L639.9 648.3 L638.6 647.7 L637.3 647.4 L636.0 647.6 L634.7 645.8 L633.4 645.2 L632.1 645.3 L630.7 645.4 L629.4 643.3 L628.1 642.4 L626.8 642.1 L625.5 642.4 L624.2 641.9 L622.9 641.4 L621.5 641.7 L620.2 642.7 L618.9 643.1 L617.6 643.5 L616.2 643.9 L614.9 642.8 L613.6 644.0 L612.2 644.9 L610.9 645.5 L609.6 644.5 L608.2 645.8 L606.9 645.7 L605.6 646.6 L604.2 645.4 L602.9 646.7 L601.6 647.2 L600.3 646.8 L598.9 646.3 L597.6 645.8 L596.3 645.0 L595.0 644.2 L593.7 643.6 L592.3 643.9 L591.0 642.2 L589.7 642.8 L588.4 642.0 L587.0 642.6 L585.6 642.9 L584.2 643.1 L582.8 643.9 L581.4 644.3 L580.0 644.1 L578.6 645.1 L577.2 643.8 L575.8 644.1 L574.4 644.4 L573.1 645.0 L571.7 645.7 L570.3 646.1 L569.0 646.9 L567.6 647.4 L566.3 646.4 L564.9 647.3 L563.5 647.9 L562.2 647.9 L560.8 647.7 L559.5 649.0 L558.1 648.9 L556.7 649.9 L555.4 649.8 L554.0 651.1 L552.7 651.4 L551.3 649.9 L549.9 651.6 L548.6 651.9 L547.3 650.6 L546.0 649.7 L544.7 650.0 L543.3 649.3 L542.0 649.6 L540.7 649.5 L539.4 648.0 L538.1 647.3 L536.8 647.3 L535.5 647.2 L534.2 646.9 L532.9 646.0 L531.6 645.0 L530.3 644.6 L529.0 645.2 L527.6 644.0 L526.3 642.6 L525.0 643.5 L523.7 643.2 L522.4 644.2 L521.0 643.1 L519.7 643.6 L518.4 643.4 L517.1 644.2 L515.7 645.3 L514.4 644.6 L513.1 644.3 L511.7 645.5 L510.4 644.0 L509.1 644.6 L507.8 645.6 L506.4 643.7 L505.0 644.9 L503.6 643.7 L502.2 642.7 L500.8 642.9 L499.5 643.0 L498.1 642.5 L496.7 642.5 L495.3 641.2 L493.9 641.2 L492.5 642.4 L491.2 641.0 L489.8 641.6 L488.4 641.4 L487.1 642.4 L485.7 644.3 L484.4 644.3 L483.0 644.5 L481.7 644.2 L480.3 645.4 L479.0 646.7 L477.6 646.6 L476.2 647.5 L474.9 648.7 L473.5 648.7 L472.2 649.2 L470.8 648.6 L469.5 649.1 L468.1 650.2 L466.7 649.0 L465.4 649.5 L464.0 649.0 L462.7 648.7 L461.3 647.2 L459.9 648.0 L458.6 647.0 L457.2 646.9 L455.8 644.9 L454.5 645.7 L453.1 644.6 L451.7 645.2 L450.4 644.8 L449.0 642.8 L447.7 642.8 L446.3 642.0 L444.9 642.0 L443.6 641.7 L442.2 642.5 L440.8 641.5 L439.4 641.6 L438.1 642.2 L436.7 641.5 L435.3 642.2 L433.9 643.3 L432.6 643.3 L431.2 642.0 L429.8 641.7 L428.4 643.4 L427.1 643.7 L425.7 643.0 L424.3 642.2 L423.0 642.5 L421.6 644.1 L420.3 644.3 L418.9 642.6 L417.6 643.1 L416.3 643.7 L414.9 643.6 L413.6 644.7 L412.2 644.1 L410.9 645.1 L409.5 644.0 L408.2 644.9 L406.9 646.0 L405.5 645.6 L404.2 644.6 L402.8 644.8 L401.5 646.0 L400.1 645.7 L398.8 645.8 L397.5 646.2 L396.2 646.6 L394.9 647.5 L393.6 646.3 L392.3 647.1 L391.0 646.7 L389.7 647.4 L388.4 647.9 L387.1 646.9 L385.7 647.8 L384.4 648.4 L383.1 647.2 L381.8 648.9 L380.5 648.4 L379.2 648.7 L377.9 649.1 L376.6 649.6 L375.3 648.3 L374.0 649.4 L372.7 648.6 L371.4 649.5 L370.0 648.9 L368.6 647.6 L367.2 647.6 L365.9 647.3 L364.5 647.1 L363.1 647.1 L361.7 645.4 L360.4 645.1 L359.0 644.9 L357.7 645.4 L356.3 645.5 L355.0 645.7 L353.6 644.4 L352.3 644.2 L350.9 645.8 L349.6 644.2 L348.2 645.0 L346.9 645.6 L345.5 645.3 L344.2 645.1 L342.8 646.2 L341.5 645.1 L340.1 645.6 L338.8 646.3 L337.4 645.0 L336.1 645.5 L334.7 645.8 L333.4 646.1 L332.0 645.4 L330.7 646.0 L329.4 645.2 L328.0 645.2 L326.7 645.7 L325.4 645.3 L324.0 646.9 L322.7 645.5 L321.4 645.5 L320.0 646.5 L318.7 646.4 L317.4 645.4 L316.0 646.6 L314.7 646.1 L313.4 645.6 L312.0 646.1 L310.7 645.6 L309.3 646.0 L308.0 647.5 L306.7 646.9 L305.3 648.1 L304.0 646.9 L302.7 647.1 L301.3 647.3 L300.0 648.9 L298.7 648.8 L297.3 648.0 L296.0 648.4 L294.7 650.2 L293.3 649.9 L292.0 650.9 L290.7 649.5 L289.3 650.9 L288.0 650.2 L286.7 651.7 L285.3 651.5 L283.9 651.6 L282.5 650.8 L281.2 652.3 L279.8 650.6 L278.4 650.6 L277.0 651.8 L275.7 650.7 L274.3 650.7 L272.9 651.5 L271.5 651.9 L270.1 652.4 L268.8 652.1 L267.4 650.8 L266.0 652.0 L264.6 651.8 L263.3 649.7 L261.9 650.4 L260.5 648.8 L259.2 648.3 L257.8 647.1 L256.4 648.0 L255.1 646.9 L253.7 647.1 L252.3 645.6 L250.9 644.4 L249.6 644.0 L248.2 643.5 L246.8 644.2 L245.5 642.1 L244.1 641.3 L242.8 642.0 L241.5 641.6 L240.2 642.5 L238.8 643.1 L237.5 643.3 L236.2 642.5 L234.9 642.6 L233.6 643.5 L232.3 644.1 L231.0 643.8 L229.6 644.2 L228.3 645.0 L227.0 643.7 L225.7 644.1 L224.4 644.7 L223.1 645.0 L221.8 645.9 L220.4 645.4 L219.1 645.8 L217.8 645.5 L216.4 647.0 L215.0 647.8 L213.7 647.5 L212.3 647.9 L210.9 649.0 L209.5 649.9 L208.1 651.8 L206.8 651.3 L205.4 651.5 L204.1 650.9 L202.8 651.0 L201.4 648.8 L200.1 649.5 L198.8 648.1 L197.4 647.1 L196.1 647.6 L194.8 648.3 L193.5 648.0 L192.2 647.1 L190.9 649.2 L189.6 648.2 L188.3 649.0 L186.9 649.4 L185.6 648.7 L184.3 649.2 L183.0 649.2 L181.7 649.0 L180.4 649.2 L179.1 650.7 L177.8 650.3 L176.5 651.4 L175.1 649.3 L173.7 649.2 L172.3 648.4 L171.0 649.3 L169.6 648.5 L168.2 648.1 L166.9 646.8 L165.5 645.4 L164.1 645.5 L162.7 644.5 L161.4 643.6 L160.0 644.1 L158.6 643.0 L157.2 642.6 L155.8 643.4 L154.4 644.2 L153.0 644.2 L151.5 643.2 L150.1 642.5 L148.7 643.8 L147.3 642.5 L145.9 643.3 L144.5 642.4 L143.1 644.2 L141.7 643.4 L140.4 643.3 L139.1 643.1 L137.8 643.7 L136.4 644.7 L135.1 643.7 L133.8 643.4 L132.4 644.1 L131.1 645.0 L129.8 644.0 L128.5 644.7 L127.1 645.3 L125.8 644.3 L124.5 645.3 L123.2 644.9 L121.8 644.2 L120.5 644.0 L119.2 645.7 L117.9 644.7 L116.6 644.5 L115.2 645.4 L113.9 644.7 L112.6 644.5 L111.3 644.0 L110.0 644.8 L108.7 643.8 L107.3 644.1 L106.0 644.6 L104.7 644.3 L103.4 643.3 L102.1 643.3 L100.8 644.2 L99.4 644.2 L98.1 642.9 L96.8 644.7 L95.5 642.9 L94.2 643.0 L92.9 642.9 L91.6 643.6 L90.2 643.9 L88.9 644.4 L87.6 643.0 L86.3 644.1 L85.0 642.9 L83.7 643.9 L82.4 643.2 L81.1 643.4 L79.8 642.8 L78.4 644.5 L77.1 643.6 L75.7 645.1 L74.4 644.6 L73.0 645.4 L71.7 645.8 L70.3 645.8 L69.0 646.8 L67.6 647.2 L66.3 646.3 L64.9 646.9 L63.6 647.4 L62.2 646.9 L60.9 647.3 L59.6 647.3 L58.2 647.8 L56.9 647.4 L55.5 647.8 L54.2 648.1 L52.8 648.4 L51.5 648.2 L50.1 649.1 L48.8 648.8 L47.4 649.3 L46.1 649.3 L44.7 649.3 L43.4 649.7 L42.0 649.8 L40.7 649.7 L39.3 650.1 L38.0 650.1 L36.6 650.3 L35.3 650.4 L33.9 650.7 L32.6 650.4 L31.2 650.7 L29.9 650.5 L28.5 651.2 L27.2 651.4 L25.8 651.5 L24.5 651.1 L23.1 651.6 L21.7 651.6 L20.3 651.4 L19.0 651.5 L17.6 651.8 L16.2 650.8 L14.8 649.4 L13.4 648.9 L12.0 647.8 L10.6 646.6 L9.3 645.9 L7.9 644.6 L6.5 643.7" fill="none" stroke="#888" stroke-width="0.5"/><path d="M6.5 6.5 H770 M6.5 6.5 V645" stroke="#3a3a3a" stroke-width="1"/></svg>
<div class="t" style="left:1117.50px;top:233.28px;font-size:12.80px;color:#111;font-weight:bold;font-family:'Liberation Serif',serif;transform:scaleX(0.8350);">Phòng Giáo dục và Đào tạo MISA</div>
<div class="t" style="left:1117.50px;top:252.28px;font-size:12.80px;color:#111;font-weight:bold;font-family:'Liberation Serif',serif;transform:scaleX(0.8350);">Trường THCS MISA</div>
<div class="t" style="left:1330.31px;top:272.60px;font-size:17.20px;color:#111;font-weight:bold;font-family:'Liberation Serif',serif;transform:scaleX(0.8300);">BẢNG TỔNG HỢP KIỂM KÊ TÀI SẢN CỐ ĐỊNH</div>
<div class="t" style="left:1465.31px;top:294.95px;font-size:12.60px;color:#222;font-family:'Liberation Serif',serif;transform:scaleX(0.8400);">Năm 2016</div>
<div class="a" style="left:1115.5px;top:323.5px;width:745.0px;height:95.69999999999999px;background:#d4d4d4"></div>
<div class="t" style="left:1126.93px;top:422.83px;font-size:12.20px;color:#111;font-weight:bold;font-family:'Liberation Serif',serif;transform:scaleX(0.8100);">A</div>
<div class="t" style="left:1148.00px;top:422.28px;font-size:12.20px;color:#111;font-weight:bold;font-family:'Liberation Serif',serif;transform:scaleX(0.8100);">TSCĐ vô hình</div>
<div class="t" style="left:1296.27px;top:423.61px;font-size:10.50px;color:#1a1a1a;font-weight:bold;transform:scaleX(0.6810);">2.035.000.000</div>
<div class="t" style="left:1370.37px;top:423.61px;font-size:10.50px;color:#1a1a1a;font-weight:bold;transform:scaleX(0.6810);">7.112.000.000</div>
<div class="t" style="left:1441.27px;top:423.61px;font-size:10.50px;color:#1a1a1a;font-weight:bold;transform:scaleX(0.6810);">3.562.000.000</div>
<div class="t" style="left:1514.27px;top:423.61px;font-size:10.50px;color:#1a1a1a;font-weight:bold;transform:scaleX(0.6810);">3.550.000.000</div>
<div class="t" style="left:1590.27px;top:423.61px;font-size:10.50px;color:#1a1a1a;font-weight:bold;transform:scaleX(0.6810);">3.600.000.000</div>
<div class="t" style="left:1671.21px;top:423.61px;font-size:10.50px;color:#1a1a1a;font-weight:bold;transform:scaleX(0.6810);">50.000.000</div>
<div class="t" style="left:1734.27px;top:423.61px;font-size:10.50px;color:#1a1a1a;font-weight:bold;transform:scaleX(0.6810);">3.550.000.000</div>
<div class="t" style="left:1812.27px;top:423.61px;font-size:10.50px;color:#1a1a1a;font-weight:bold;transform:scaleX(0.6810);">5.547.000.000</div>
<div class="t" style="left:1128.58px;top:442.38px;font-size:12.20px;color:#111;font-weight:bold;font-family:'Liberation Serif',serif;transform:scaleX(0.8100);">I</div>
<div class="t" style="left:1148.00px;top:442.08px;font-size:12.20px;color:#111;font-weight:bold;font-family:'Liberation Serif',serif;transform:scaleX(0.8100);">Quyền sử dụng đất</div>
<div class="t" style="left:1296.27px;top:443.41px;font-size:10.50px;color:#1a1a1a;font-weight:bold;transform:scaleX(0.6810);">2.000.000.000</div>
<div class="t" style="left:1369.97px;top:443.41px;font-size:10.50px;color:#1a1a1a;font-weight:bold;transform:scaleX(0.6810);">7.100.000.000</div>
<div class="t" style="left:1441.27px;top:443.41px;font-size:10.50px;color:#1a1a1a;font-weight:bold;transform:scaleX(0.6810);">3.550.000.000</div>
<div class="t" style="left:1514.27px;top:443.41px;font-size:10.50px;color:#1a1a1a;font-weight:bold;transform:scaleX(0.6810);">3.550.000.000</div>
<div class="t" style="left:1590.27px;top:443.41px;font-size:10.50px;color:#1a1a1a;font-weight:bold;transform:scaleX(0.6810);">3.600.000.000</div>
<div class="t" style="left:1671.21px;top:443.41px;font-size:10.50px;color:#1a1a1a;font-weight:bold;transform:scaleX(0.6810);">50.000.000</div>
<div class="t" style="left:1734.27px;top:443.41px;font-size:10.50px;color:#1a1a1a;font-weight:bold;transform:scaleX(0.6810);">3.550.000.000</div>
<div class="t" style="left:1812.27px;top:443.41px;font-size:10.50px;color:#1a1a1a;font-weight:bold;transform:scaleX(0.6810);">5.500.000.000</div>
<div class="t" style="left:1128.03px;top:461.83px;font-size:12.20px;color:#333;font-family:'Liberation Serif',serif;transform:scaleX(0.8100);">1</div>
<div class="t" style="left:1148.00px;top:461.18px;font-size:12.20px;color:#222;font-family:'Liberation Serif',serif;transform:scaleX(0.8100);">Phòng Hành chính</div>
<div class="t" style="left:1296.27px;top:462.51px;font-size:10.50px;color:#1a1a1a;font-weight:bold;transform:scaleX(0.6810);">2.000.000.000</div>
<div class="t" style="left:1600.21px;top:462.51px;font-size:10.50px;color:#1a1a1a;font-weight:bold;transform:scaleX(0.6810);">50.000.000</div>
<div class="t" style="left:1671.21px;top:462.51px;font-size:10.50px;color:#5a5a5a;transform:scaleX(0.6810);">50.000.000</div>
<div class="t" style="left:1812.27px;top:462.51px;font-size:10.50px;color:#1a1a1a;font-weight:bold;transform:scaleX(0.6810);">1.950.000.000</div>
<div class="t" style="left:1128.03px;top:480.93px;font-size:12.20px;color:#333;font-family:'Liberation Serif',serif;transform:scaleX(0.8100);">2</div>
<div class="t" style="left:1148.00px;top:480.28px;font-size:12.20px;color:#222;font-family:'Liberation Serif',serif;transform:scaleX(0.8100);">Phòng Kế toán</div>
<div class="t" style="left:1369.97px;top:481.61px;font-size:10.50px;color:#1a1a1a;font-weight:bold;transform:scaleX(0.6810);">3.550.000.000</div>
<div class="t" style="left:1514.27px;top:481.61px;font-size:10.50px;color:#5a5a5a;transform:scaleX(0.6810);">3.550.000.000</div>
<div class="t" style="left:1812.27px;top:481.61px;font-size:10.50px;color:#1a1a1a;font-weight:bold;transform:scaleX(0.6810);">3.550.000.000</div>
<div class="t" style="left:1128.03px;top:499.98px;font-size:12.20px;color:#333;font-family:'Liberation Serif',serif;transform:scaleX(0.8100);">3</div>
<div class="t" style="left:1148.00px;top:499.28px;font-size:12.20px;color:#222;font-family:'Liberation Serif',serif;transform:scaleX(0.8100);">Phòng Thể dục</div>
<div class="t" style="left:1369.97px;top:500.61px;font-size:10.50px;color:#1a1a1a;font-weight:bold;transform:scaleX(0.6810);">3.550.000.000</div>
<div class="t" style="left:1441.27px;top:500.61px;font-size:10.50px;color:#5a5a5a;transform:scaleX(0.6810);">3.550.000.000</div>
<div class="t" style="left:1590.27px;top:500.61px;font-size:10.50px;color:#1a1a1a;font-weight:bold;transform:scaleX(0.6810);">3.550.000.000</div>
<div class="t" style="left:1734.27px;top:500.61px;font-size:10.50px;color:#5a5a5a;transform:scaleX(0.6810);">3.550.000.000</div>
<div class="t" style="left:1126.65px;top:519.23px;font-size:12.20px;color:#111;font-weight:bold;font-family:'Liberation Serif',serif;transform:scaleX(0.8100);">II</div>
<div class="t" style="left:1148.00px;top:518.78px;font-size:12.20px;color:#111;font-weight:bold;font-family:'Liberation Serif',serif;transform:scaleX(0.8100);">Quyền tác giả</div>
<div class="t" style="left:1124.73px;top:538.68px;font-size:12.20px;color:#111;font-weight:bold;font-family:'Liberation Serif',serif;transform:scaleX(0.8100);">III</div>
<div class="t" style="left:1148.00px;top:538.18px;font-size:12.20px;color:#111;font-weight:bold;font-family:'Liberation Serif',serif;transform:scaleX(0.8100);">Quyền sở hữu công nghiệp</div>
<div class="t" style="left:1125.01px;top:563.08px;font-size:12.20px;color:#111;font-weight:bold;font-family:'Liberation Serif',serif;transform:scaleX(0.8100);">IV</div>
<div class="t" style="left:1148.00px;top:555.68px;font-size:12.20px;color:#111;font-weight:bold;font-family:'Liberation Serif',serif;transform:scaleX(0.8100);">Quyền đối với giống cây</div>
<div class="t" style="left:1148.00px;top:568.68px;font-size:12.20px;color:#111;font-weight:bold;font-family:'Liberation Serif',serif;transform:scaleX(0.8100);">trồng</div>
<div class="t" style="left:1126.93px;top:587.53px;font-size:12.20px;color:#111;font-weight:bold;font-family:'Liberation Serif',serif;transform:scaleX(0.8100);">V</div>
<div class="t" style="left:1148.00px;top:587.08px;font-size:12.20px;color:#111;font-weight:bold;font-family:'Liberation Serif',serif;transform:scaleX(0.8100);">Phần mềm ứng dụng</div>
<div class="t" style="left:1306.21px;top:588.41px;font-size:10.50px;color:#1a1a1a;font-weight:bold;transform:scaleX(0.6810);">35.000.000</div>
<div class="t" style="left:1379.91px;top:588.41px;font-size:10.50px;color:#1a1a1a;font-weight:bold;transform:scaleX(0.6810);">12.000.000</div>
<div class="t" style="left:1451.21px;top:588.41px;font-size:10.50px;color:#1a1a1a;font-weight:bold;transform:scaleX(0.6810);">12.000.000</div>
<div class="t" style="left:1822.21px;top:588.41px;font-size:10.50px;color:#1a1a1a;font-weight:bold;transform:scaleX(0.6810);">47.000.000</div>
<div class="t" style="left:1128.03px;top:606.78px;font-size:12.20px;color:#333;font-family:'Liberation Serif',serif;transform:scaleX(0.8100);">1</div>
<div class="t" style="left:1148.00px;top:606.08px;font-size:12.20px;color:#222;font-family:'Liberation Serif',serif;transform:scaleX(0.8100);">Phòng Giáo viên</div>
<div class="t" style="left:1306.21px;top:607.41px;font-size:10.50px;color:#1a1a1a;font-weight:bold;transform:scaleX(0.6810);">35.000.000</div>
<div class="t" style="left:1383.89px;top:607.41px;font-size:10.50px;color:#1a1a1a;font-weight:bold;transform:scaleX(0.6810);">3.000.000</div>
<div class="t" style="left:1455.19px;top:607.41px;font-size:10.50px;color:#5a5a5a;transform:scaleX(0.6810);">3.000.000</div>
<div class="t" style="left:1822.21px;top:607.41px;font-size:10.50px;color:#1a1a1a;font-weight:bold;transform:scaleX(0.6810);">38.000.000</div>
<div class="t" style="left:1128.03px;top:626.03px;font-size:12.20px;color:#333;font-family:'Liberation Serif',serif;transform:scaleX(0.8100);">2</div>
<div class="t" style="left:1148.00px;top:625.58px;font-size:12.20px;color:#222;font-family:'Liberation Serif',serif;transform:scaleX(0.8100);">Phòng Kế toán</div>
<div class="t" style="left:1383.89px;top:626.91px;font-size:10.50px;color:#1a1a1a;font-weight:bold;transform:scaleX(0.6810);">9.000.000</div>
<div class="t" style="left:1455.19px;top:626.91px;font-size:10.50px;color:#5a5a5a;transform:scaleX(0.6810);">9.000.000</div>
<div class="t" style="left:1826.19px;top:626.91px;font-size:10.50px;color:#1a1a1a;font-weight:bold;transform:scaleX(0.6810);">9.000.000</div>
<div class="t" style="left:1125.01px;top:650.48px;font-size:12.20px;color:#111;font-weight:bold;font-family:'Liberation Serif',serif;transform:scaleX(0.8100);">VI</div>
<div class="t" style="left:1148.00px;top:643.08px;font-size:12.20px;color:#111;font-weight:bold;font-family:'Liberation Serif',serif;transform:scaleX(0.8100);">Tài sản cố định vô hình</div>
<div class="t" style="left:1148.00px;top:656.08px;font-size:12.20px;color:#111;font-weight:bold;font-family:'Liberation Serif',serif;transform:scaleX(0.8100);">khác</div>
<div class="t" style="left:1127.20px;top:674.93px;font-size:12.20px;color:#111;font-weight:bold;font-family:'Liberation Serif',serif;transform:scaleX(0.8100);">B</div>
<div class="t" style="left:1148.00px;top:674.48px;font-size:12.20px;color:#111;font-weight:bold;font-family:'Liberation Serif',serif;transform:scaleX(0.8100);">TSCĐ hữu hình</div>
<div class="t" style="left:1296.27px;top:675.81px;font-size:10.50px;color:#1a1a1a;font-weight:bold;transform:scaleX(0.6810);">1.023.500.000</div>
<div class="t" style="left:1379.91px;top:675.81px;font-size:10.50px;color:#1a1a1a;font-weight:bold;transform:scaleX(0.6810);">49.500.000</div>
<div class="t" style="left:1451.21px;top:675.81px;font-size:10.50px;color:#1a1a1a;font-weight:bold;transform:scaleX(0.6810);">40.000.000</div>
<div class="t" style="left:1528.19px;top:675.81px;font-size:10.50px;color:#1a1a1a;font-weight:bold;transform:scaleX(0.6810);">9.500.000</div>
<div class="t" style="left:1596.23px;top:675.81px;font-size:10.50px;color:#1a1a1a;font-weight:bold;transform:scaleX(0.6810);">631.500.000</div>
<div class="t" style="left:1667.23px;top:675.81px;font-size:10.50px;color:#1a1a1a;font-weight:bold;transform:scaleX(0.6810);">622.000.000</div>
<div class="t" style="left:1748.19px;top:675.81px;font-size:10.50px;color:#1a1a1a;font-weight:bold;transform:scaleX(0.6810);">9.500.000</div>
<div class="t" style="left:1818.23px;top:675.81px;font-size:10.50px;color:#1a1a1a;font-weight:bold;transform:scaleX(0.6810);">441.500.000</div>
<div class="t" style="left:1128.03px;top:694.43px;font-size:12.20px;color:#333;font-family:'Liberation Serif',serif;transform:scaleX(0.8100);">1</div>
<div class="t" style="left:1148.00px;top:693.98px;font-size:12.20px;color:#222;font-family:'Liberation Serif',serif;transform:scaleX(0.8100);">Phòng Giáo viên</div>
<div class="t" style="left:1310.19px;top:695.31px;font-size:10.50px;color:#1a1a1a;font-weight:bold;transform:scaleX(0.6810);">4.000.000</div>
<div class="t" style="left:1379.91px;top:695.31px;font-size:10.50px;color:#1a1a1a;font-weight:bold;transform:scaleX(0.6810);">40.000.000</div>
<div class="t" style="left:1451.21px;top:695.31px;font-size:10.50px;color:#5a5a5a;transform:scaleX(0.6810);">40.000.000</div>
<div class="t" style="left:1600.21px;top:695.31px;font-size:10.50px;color:#1a1a1a;font-weight:bold;transform:scaleX(0.6810);">12.000.000</div>
<div class="t" style="left:1671.21px;top:695.31px;font-size:10.50px;color:#5a5a5a;transform:scaleX(0.6810);">12.000.000</div>
<div class="t" style="left:1822.21px;top:695.31px;font-size:10.50px;color:#1a1a1a;font-weight:bold;transform:scaleX(0.6810);">32.000.000</div>
<div class="t" style="left:1128.03px;top:713.88px;font-size:12.20px;color:#333;font-family:'Liberation Serif',serif;transform:scaleX(0.8100);">2</div>
<div class="t" style="left:1148.00px;top:713.38px;font-size:12.20px;color:#222;font-family:'Liberation Serif',serif;transform:scaleX(0.8100);">Phòng Hành chính</div>
<div class="t" style="left:1302.23px;top:714.71px;font-size:10.50px;color:#1a1a1a;font-weight:bold;transform:scaleX(0.6810);">610.000.000</div>
<div class="t" style="left:1383.89px;top:714.71px;font-size:10.50px;color:#1a1a1a;font-weight:bold;transform:scaleX(0.6810);">9.500.000</div>
<div class="t" style="left:1528.19px;top:714.71px;font-size:10.50px;color:#5a5a5a;transform:scaleX(0.6810);">9.500.000</div>
<div class="t" style="left:1596.23px;top:714.71px;font-size:10.50px;color:#1a1a1a;font-weight:bold;transform:scaleX(0.6810);">610.000.000</div>
<div class="t" style="left:1667.23px;top:714.71px;font-size:10.50px;color:#5a5a5a;transform:scaleX(0.6810);">610.000.000</div>
<div class="t" style="left:1826.19px;top:714.71px;font-size:10.50px;color:#1a1a1a;font-weight:bold;transform:scaleX(0.6810);">9.500.000</div>
<div class="t" style="left:1128.03px;top:733.13px;font-size:12.20px;color:#333;font-family:'Liberation Serif',serif;transform:scaleX(0.8100);">3</div>
<div class="t" style="left:1148.00px;top:732.48px;font-size:12.20px;color:#222;font-family:'Liberation Serif',serif;transform:scaleX(0.8100);">Phòng Kế toán</div>
<div class="t" style="left:1310.19px;top:733.81px;font-size:10.50px;color:#1a1a1a;font-weight:bold;transform:scaleX(0.6810);">9.500.000</div>
<div class="t" style="left:1604.19px;top:733.81px;font-size:10.50px;color:#1a1a1a;font-weight:bold;transform:scaleX(0.6810);">9.500.000</div>
<div class="t" style="left:1748.19px;top:733.81px;font-size:10.50px;color:#5a5a5a;transform:scaleX(0.6810);">9.500.000</div>
<div class="t" style="left:1128.03px;top:752.43px;font-size:12.20px;color:#333;font-family:'Liberation Serif',serif;transform:scaleX(0.8100);">4</div>
<div class="t" style="left:1148.00px;top:751.98px;font-size:12.20px;color:#222;font-family:'Liberation Serif',serif;transform:scaleX(0.8100);">Phòng Thể dục</div>
<div class="t" style="left:1302.23px;top:753.31px;font-size:10.50px;color:#1a1a1a;font-weight:bold;transform:scaleX(0.6810);">400.000.000</div>
<div class="t" style="left:1818.23px;top:753.31px;font-size:10.50px;color:#1a1a1a;font-weight:bold;transform:scaleX(0.6810);">400.000.000</div>
<div class="t" style="left:1178.78px;top:770.98px;font-size:12.20px;color:#111;font-weight:bold;font-family:'Liberation Serif',serif;transform:scaleX(0.8100);">Cộng A và B</div>
<div class="t" style="left:1296.27px;top:772.31px;font-size:10.50px;color:#1a1a1a;font-weight:bold;transform:scaleX(0.6810);">3.058.500.000</div>
<div class="t" style="left:1369.97px;top:772.31px;font-size:10.50px;color:#1a1a1a;font-weight:bold;transform:scaleX(0.6810);">7.161.500.000</div>
<div class="t" style="left:1441.27px;top:772.31px;font-size:10.50px;color:#1a1a1a;font-weight:bold;transform:scaleX(0.6810);">3.602.000.000</div>
<div class="t" style="left:1514.27px;top:772.31px;font-size:10.50px;color:#1a1a1a;font-weight:bold;transform:scaleX(0.6810);">3.559.500.000</div>
<div class="t" style="left:1590.27px;top:772.31px;font-size:10.50px;color:#1a1a1a;font-weight:bold;transform:scaleX(0.6810);">4.231.500.000</div>
<div class="t" style="left:1667.23px;top:772.31px;font-size:10.50px;color:#1a1a1a;font-weight:bold;transform:scaleX(0.6810);">672.000.000</div>
<div class="t" style="left:1734.27px;top:772.31px;font-size:10.50px;color:#1a1a1a;font-weight:bold;transform:scaleX(0.6810);">3.559.500.000</div>
<div class="t" style="left:1812.27px;top:772.31px;font-size:10.50px;color:#1a1a1a;font-weight:bold;transform:scaleX(0.6810);">5.988.500.000</div>
<div class="t" style="left:1419.27px;top:326.78px;font-size:12.20px;color:#111;font-weight:bold;font-family:'Liberation Serif',serif;transform:scaleX(0.8100);">Tăng trong năm</div>
<div class="t" style="left:1637.45px;top:326.78px;font-size:12.20px;color:#111;font-weight:bold;font-family:'Liberation Serif',serif;transform:scaleX(0.8100);">Giảm trong năm</div>
<div class="t" style="left:1121.16px;top:355.78px;font-size:12.20px;color:#111;font-weight:bold;font-family:'Liberation Serif',serif;transform:scaleX(0.8100);">STT</div>
<div class="t" style="left:1173.14px;top:355.78px;font-size:12.20px;color:#111;font-weight:bold;font-family:'Liberation Serif',serif;transform:scaleX(0.8100);">Tên phòng ban</div>
<div class="t" style="left:1276.21px;top:355.78px;font-size:12.20px;color:#111;font-weight:bold;font-family:'Liberation Serif',serif;transform:scaleX(0.8100);">Tồn đầu năm</div>
<div class="t" style="left:1354.12px;top:365.78px;font-size:12.20px;color:#111;font-weight:bold;font-family:'Liberation Serif',serif;transform:scaleX(0.8100);">Tổng số tăng</div>
<div class="t" style="left:1434.46px;top:365.78px;font-size:12.20px;color:#111;font-weight:bold;font-family:'Liberation Serif',serif;transform:scaleX(0.8100);">Mua mới</div>
<div class="t" style="left:1498.26px;top:359.28px;font-size:12.20px;color:#111;font-weight:bold;font-family:'Liberation Serif',serif;transform:scaleX(0.8100);">Tăng do điều</div>
<div class="t" style="left:1510.90px;top:372.28px;font-size:12.20px;color:#111;font-weight:bold;font-family:'Liberation Serif',serif;transform:scaleX(0.8100);">chuyển</div>
<div class="t" style="left:1572.22px;top:365.78px;font-size:12.20px;color:#111;font-weight:bold;font-family:'Liberation Serif',serif;transform:scaleX(0.8100);">Tổng số giảm</div>
<div class="t" style="left:1645.86px;top:352.28px;font-size:12.20px;color:#111;font-weight:bold;font-family:'Liberation Serif',serif;transform:scaleX(0.8100);">Giảm tài sản,</div>
<div class="t" style="left:1646.12px;top:365.48px;font-size:12.20px;color:#111;font-weight:bold;font-family:'Liberation Serif',serif;transform:scaleX(0.8100);">bán thanh lý,</div>
<div class="t" style="left:1654.57px;top:378.58px;font-size:12.20px;color:#111;font-weight:bold;font-family:'Liberation Serif',serif;transform:scaleX(0.8100);">chờ xử lý</div>
<div class="t" style="left:1717.45px;top:359.28px;font-size:12.20px;color:#111;font-weight:bold;font-family:'Liberation Serif',serif;transform:scaleX(0.8100);">Giảm do điều</div>
<div class="t" style="left:1730.90px;top:372.28px;font-size:12.20px;color:#111;font-weight:bold;font-family:'Liberation Serif',serif;transform:scaleX(0.8100);">chuyển</div>
<div class="t" style="left:1792.40px;top:355.78px;font-size:12.20px;color:#111;font-weight:bold;font-family:'Liberation Serif',serif;transform:scaleX(0.8100);">Tồn cuối năm</div>
<div class="t" style="left:1128.03px;top:404.08px;font-size:12.20px;color:#111;font-weight:bold;font-family:'Liberation Serif',serif;transform:scaleX(0.8100);">1</div>
<div class="t" style="left:1202.53px;top:404.08px;font-size:12.20px;color:#111;font-weight:bold;font-family:'Liberation Serif',serif;transform:scaleX(0.8100);">2</div>
<div class="t" style="left:1302.03px;top:404.08px;font-size:12.20px;color:#111;font-weight:bold;font-family:'Liberation Serif',serif;transform:scaleX(0.8100);">3</div>
<div class="t" style="left:1362.50px;top:404.08px;font-size:12.20px;color:#111;font-weight:bold;font-family:'Liberation Serif',serif;transform:scaleX(0.8100);">4 = (5+6)</div>
<div class="t" style="left:1451.33px;top:404.08px;font-size:12.20px;color:#111;font-weight:bold;font-family:'Liberation Serif',serif;transform:scaleX(0.8100);">5</div>
<div class="t" style="left:1523.53px;top:404.08px;font-size:12.20px;color:#111;font-weight:bold;font-family:'Liberation Serif',serif;transform:scaleX(0.8100);">6</div>
<div class="t" style="left:1581.70px;top:404.08px;font-size:12.20px;color:#111;font-weight:bold;font-family:'Liberation Serif',serif;transform:scaleX(0.8100);">7 = (8+9)</div>
<div class="t" style="left:1671.53px;top:404.08px;font-size:12.20px;color:#111;font-weight:bold;font-family:'Liberation Serif',serif;transform:scaleX(0.8100);">8</div>
<div class="t" style="left:1743.53px;top:404.08px;font-size:12.20px;color:#111;font-weight:bold;font-family:'Liberation Serif',serif;transform:scaleX(0.8100);">9</div>
<div class="t" style="left:1796.11px;top:404.08px;font-size:12.20px;color:#111;font-weight:bold;font-family:'Liberation Serif',serif;transform:scaleX(0.8100);">10 = (3+4-7)</div>
<svg class="a" style="left:0px;top:0px" width="1899" height="914" viewBox="0 0 1899 914"><path d="M1115.5 323.5 H1860.5" stroke="#1e1e1e" stroke-width="1.2"/><path d="M1344.5 342.5 H1782.5" stroke="#1e1e1e" stroke-width="1.2"/><path d="M1115.5 400.5 H1860.5" stroke="#1e1e1e" stroke-width="1.2"/><path d="M1115.5 419.2 H1860.5" stroke="#1e1e1e" stroke-width="1.2"/><path d="M1115.5 323.5 V787.2" stroke="#1e1e1e" stroke-width="1.2"/><path d="M1145.5 323.5 V787.2" stroke="#1e1e1e" stroke-width="1.2"/><path d="M1264.5 323.5 V787.2" stroke="#1e1e1e" stroke-width="1.2"/><path d="M1344.5 323.5 V787.2" stroke="#1e1e1e" stroke-width="1.2"/><path d="M1418.2 342.5 V787.2" stroke="#1e1e1e" stroke-width="1.2"/><path d="M1489.5 342.5 V787.2" stroke="#1e1e1e" stroke-width="1.2"/><path d="M1562.5 323.5 V787.2" stroke="#1e1e1e" stroke-width="1.2"/><path d="M1638.5 342.5 V787.2" stroke="#1e1e1e" stroke-width="1.2"/><path d="M1709.5 342.5 V787.2" stroke="#1e1e1e" stroke-width="1.2"/><path d="M1782.5 323.5 V787.2" stroke="#1e1e1e" stroke-width="1.2"/><path d="M1860.5 323.5 V787.2" stroke="#1e1e1e" stroke-width="1.2"/><path d="M1115.5 438.5 H1860.5" stroke="#1e1e1e" stroke-width="1.2"/><path d="M1115.5 458.3 H1860.5" stroke="#1e1e1e" stroke-width="1.2"/><path d="M1115.5 477.4 H1860.5" stroke="#333" stroke-width="1" stroke-dasharray="3.2 2.2"/><path d="M1115.5 496.5 H1860.5" stroke="#333" stroke-width="1" stroke-dasharray="3.2 2.2"/><path d="M1115.5 515.5 H1860.5" stroke="#1e1e1e" stroke-width="1.2"/><path d="M1115.5 535.0 H1860.5" stroke="#1e1e1e" stroke-width="1.2"/><path d="M1115.5 554.4 H1860.5" stroke="#1e1e1e" stroke-width="1.2"/><path d="M1115.5 583.8 H1860.5" stroke="#1e1e1e" stroke-width="1.2"/><path d="M1115.5 603.3 H1860.5" stroke="#1e1e1e" stroke-width="1.2"/><path d="M1115.5 622.3 H1860.5" stroke="#333" stroke-width="1" stroke-dasharray="3.2 2.2"/><path d="M1115.5 641.8 H1860.5" stroke="#1e1e1e" stroke-width="1.2"/><path d="M1115.5 671.2 H1860.5" stroke="#1e1e1e" stroke-width="1.2"/><path d="M1115.5 690.7 H1860.5" stroke="#1e1e1e" stroke-width="1.2"/><path d="M1115.5 710.2 H1860.5" stroke="#333" stroke-width="1" stroke-dasharray="3.2 2.2"/><path d="M1115.5 729.6 H1860.5" stroke="#333" stroke-width="1" stroke-dasharray="3.2 2.2"/><path d="M1115.5 748.7 H1860.5" stroke="#333" stroke-width="1" stroke-dasharray="3.2 2.2"/><path d="M1115.5 768.2 H1860.5" stroke="#1e1e1e" stroke-width="1.2"/><path d="M1115.5 787.2 H1860.5" stroke="#1e1e1e" stroke-width="1.2"/></svg>
<div class="t" style="left:1117.50px;top:856.46px;font-size:9.00px;color:#333;font-family:'Liberation Serif',serif;transform:scaleX(0.8400);">QLTS.VN</div>
<div class="t" style="left:1343px;top:712.24px;font-family:'Liberation Serif',serif;font-weight:bold;font-size:63px;color:#68a3c8;-webkit-text-stroke:1.6px #68a3c8;transform-origin:0 52.76px;transform:rotate(-44.5deg) scaleX(0.945)">BÁO CÁO MẪU</div>
<div class="a" style="left:318px;top:304px;width:764px;height:52px;border:6px solid #f84343;box-shadow:2px 3px 4px rgba(0,0,0,0.42), inset 2px 3px 4px rgba(0,0,0,0.42)"></div>
<div class="a" style="left:2px;top:538px;width:260px;height:56px;border:6px solid #f84343;box-shadow:2px 3px 4px rgba(0,0,0,0.42), inset 2px 3px 4px rgba(0,0,0,0.42)"></div>
<svg class="a" style="left:0px;top:0px" width="600" height="700" viewBox="0 0 600 700"><defs><filter id="ds" x="-20%" y="-20%" width="140%" height="140%"><feGaussianBlur in="SourceAlpha" stdDeviation="1.6"/><feOffset dx="2" dy="3"/><feComponentTransfer><feFuncA type="linear" slope="0.45"/></feComponentTransfer><feMerge><feMergeNode/><feMergeNode in="SourceGraphic"/></feMerge></filter></defs><g filter="url(#ds)"><path d="M115.5 541.5 L351.3 371.6" stroke="#f84343" stroke-width="9.8" stroke-dasharray="32 8" stroke-dashoffset="3" fill="none"/><path d="M373.2 356.6 L341.2 361.5 L357.4 384.7 Z" fill="#f84343"/></g></svg>
</body></html>
